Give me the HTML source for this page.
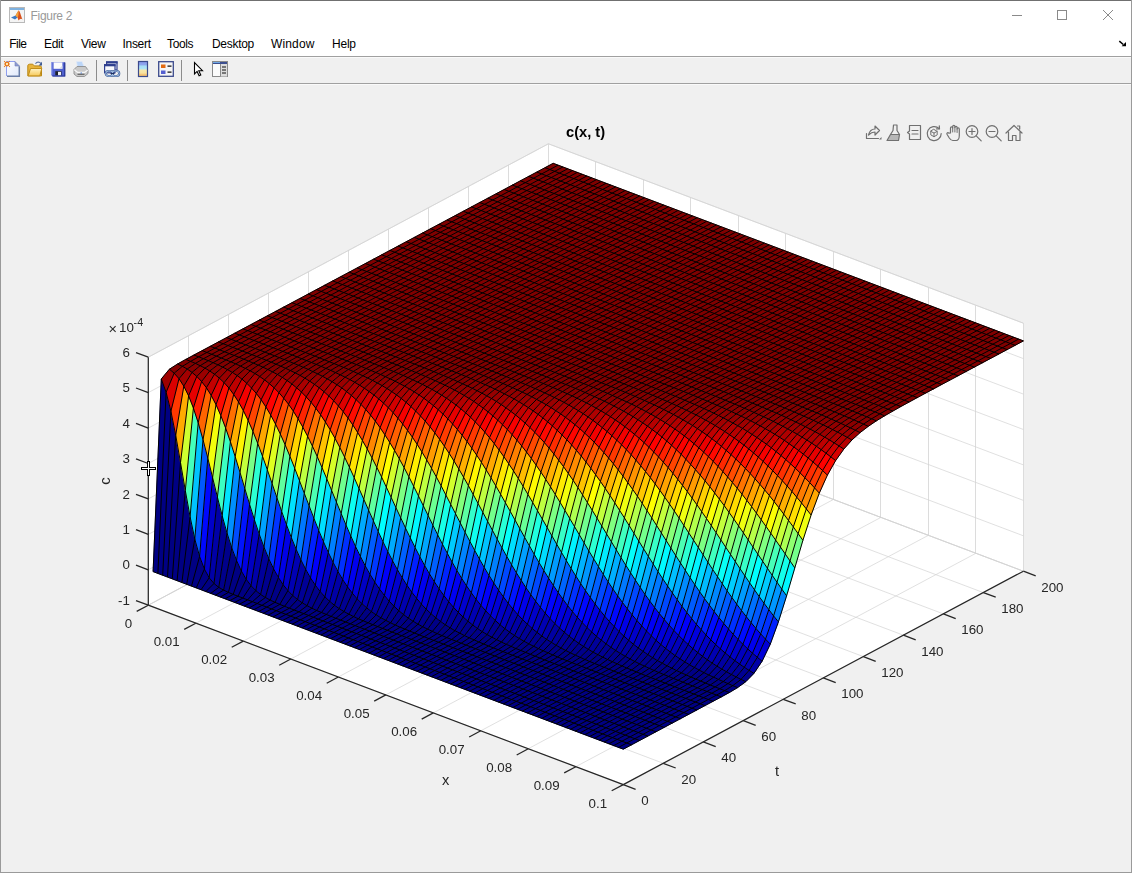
<!DOCTYPE html>
<html><head><meta charset="utf-8"><title>Figure 2</title>
<style>
html,body{margin:0;padding:0}
body{width:1132px;height:873px;overflow:hidden;background:#f0f0f0;position:relative;font-family:"Liberation Sans",sans-serif}
.a{position:absolute}
.m{position:absolute;top:37px;font-size:12px;line-height:14px;color:#000;white-space:nowrap}
svg{position:absolute;left:0;top:0}
svg{will-change:transform}
</style></head><body>
<div class="a" style="left:0;top:0;width:1132px;height:31px;background:#fff"></div>
<div class="a" style="left:30.5px;top:8px;font-size:12px;letter-spacing:-.3px;line-height:16px;color:#999">Figure 2</div>
<div class="a" style="left:0;top:31px;width:1132px;height:25px;background:#fff"></div>
<div class="m" style="left:9.2px;letter-spacing:-0.5px">File</div>
<div class="m" style="left:44px;letter-spacing:-0.35px">Edit</div>
<div class="m" style="left:81px;letter-spacing:-0.33px">View</div>
<div class="m" style="left:122.5px;letter-spacing:-0.3px">Insert</div>
<div class="m" style="left:167px;letter-spacing:-0.36px">Tools</div>
<div class="m" style="left:212px;letter-spacing:-0.3px">Desktop</div>
<div class="m" style="left:271px;letter-spacing:0.15px">Window</div>
<div class="m" style="left:332px;letter-spacing:-0.22px">Help</div>
<div class="a" style="left:0;top:56px;width:1132px;height:1px;background:#a0a0a0"></div>
<div class="a" style="left:0;top:57px;width:1132px;height:1px;background:#fafafa"></div>
<div class="a" style="left:0;top:83px;width:1132px;height:1px;background:#a0a0a0"></div>
<div class="a" style="left:0;top:84px;width:1132px;height:1px;background:#fafafa"></div>
<div class="a" style="left:96px;top:60px;width:1px;height:21px;background:#8c8c8c"></div>
<div class="a" style="left:127px;top:60px;width:1px;height:21px;background:#8c8c8c"></div>
<div class="a" style="left:181px;top:60px;width:1px;height:21px;background:#8c8c8c"></div>
<svg width="1132" height="90" viewBox="0 0 1132 90"><g transform="translate(9,7)"><rect x="0.5" y="0.5" width="15" height="15" fill="#f4f4f4" stroke="#b9b9b9"/><rect x="1" y="1" width="14" height="2" fill="#7fb2e0"/><path d="M2 10.5L6.5 8.5L8.5 10.5L6 12.5z" fill="#3a78c2"/><path d="M6.5 8.5L9.5 3.5C10.5 3 11.5 7 13.5 12.5C12 11 11 12 9.5 13.5L8.5 10.5z" fill="#d8511c"/><path d="M9.5 3.5C10 5 9.6 9 8.5 10.5L6.5 8.5z" fill="#f2a33a"/></g><g stroke="#8a8a8a" stroke-width="1" fill="none"><path d="M1012 15.5h10"/><rect x="1057.5" y="10.5" width="9" height="9"/><path d="M1103 10l10 10M1113 10l-10 10"/></g><path d="M1119.300 41.200l4 3.300" stroke="#000" stroke-width="1.500" fill="none"/><path d="M1126 42v4.200h-4.400z" fill="#000"/><defs><linearGradient id="pg" x1="0" y1="0" x2="1" y2="1"><stop offset="0" stop-color="#fff"/><stop offset="1" stop-color="#dfe8fb"/></linearGradient><linearGradient id="fd" x1="0" y1="0" x2="0" y2="1"><stop offset="0" stop-color="#fff3c4"/><stop offset="1" stop-color="#f6c95a"/></linearGradient></defs><g transform="translate(4,61)"><path d="M2.500 .500h8.500l4.500 4.500v10.500h-13z" fill="url(#pg)"/><path d="M2.500 15v-14.500h8.500" fill="none" stroke="#8f9ff0" stroke-width="1"/><path d="M11 .500v4.500h4.500z" fill="#8c9bd2" stroke="#7282b8" stroke-width=".6"/><path d="M3 15.200h12.300v-10" fill="none" stroke="#6b7fa8" stroke-width="1.500"/><circle cx="3" cy="3" r="1.900" fill="#ffe7b0" stroke="#e8740f" stroke-width="1.400"/><path d="M.200 .200l.700 .700M5.100 5.100l.700 .700M.200 5.800l.700-.700M5.100 .900l.700-.700" stroke="#e8740f" stroke-width="1.100"/></g><g transform="translate(27,61)"><path d="M.800 5c0-1.200.600-1.800 1.800-1.800h3.200l1.500 1.700h5.700c1 0 1.500.500 1.500 1.500v8.500h-13.700z" fill="#e8b43c" stroke="#b98612"/><path d="M1.200 14.900l2.300-7.400h11.300l-2 7.400z" fill="url(#fd)" stroke="#c08d18"/><path d="M8.500 2.800c1.200-2 4-2.200 5.500-.200" fill="none" stroke="#5d77a8" stroke-width="1.200"/><path d="M15 .800v3.700h-3.300z" fill="#3f5a92"/></g><g transform="translate(50,61)"><path d="M1.200 1.200h13.800v14.300h-12.300l-1.500-1.500z" fill="#4f60d0"/><path d="M1.700 1.200v12.500" stroke="#97a3ee" stroke-width="1.200"/><path d="M2.500 15h12.300v-13.500" fill="none" stroke="#2a3590" stroke-width="1.200"/><rect x="3.600" y="1.400" width="8.800" height="6.400" fill="#fbfbfd"/><path d="M9 7.800l3.400-3.400v3.400z" fill="#d7dbe6"/><rect x="5.300" y="10.200" width="6.200" height="4" fill="#1d2028"/><rect x="8" y="10.800" width="3" height="3.400" fill="#eef0f4"/></g><g transform="translate(73,61)"><path d="M3.500 .500h5.500l2.500 6h-7z" fill="#bcd6f8" stroke="#dfe9f7" stroke-width=".8"/><path d="M1 8.500l3-3h8.500l2.500 3.500v3.500l-3.500 3h-7.500l-3-2.500z" fill="#c9c9c9" stroke="#8d8d8d" stroke-width=".9"/><path d="M1.300 8.800l3.200 2.500h7.300l3-2.300" fill="none" stroke="#f6f6f6" stroke-width="1.300"/><path d="M4.500 13.300h7" stroke="#5e5e5e" stroke-width="1.100"/><path d="M7.500 12h1.500" stroke="#4d7fd0" stroke-width="1"/></g><g transform="translate(104,61)"><rect x="2.600" y="1" width="10.400" height="8" fill="#f7f8fc" stroke="#2f3f8f" stroke-width="1.200"/><rect x="2" y=".300" width="11.600" height="2.200" fill="#2f3f8f"/><rect x=".600" y="3.800" width="10.400" height="8" fill="#f7f8fc" stroke="#2f3f8f" stroke-width="1.200"/><rect x="0" y="3.100" width="11.600" height="2.200" fill="#2f3f8f"/><rect x="1.800" y="10" width="7.200" height="5" rx="2.500" fill="none" stroke="#3d5e96" stroke-width="2.200"/><rect x="8" y="10" width="7.200" height="5" rx="2.500" fill="none" stroke="#3d5e96" stroke-width="2.200"/><rect x="1.800" y="10" width="7.200" height="5" rx="2.500" fill="none" stroke="#b9d3f2" stroke-width=".900"/><rect x="8" y="10" width="7.200" height="5" rx="2.500" fill="none" stroke="#b9d3f2" stroke-width=".900"/><path d="M6.500 12.500h4" stroke="#1f2f5f" stroke-width="1.200"/></g><defs><linearGradient id="cb" x1="0" y1="0" x2="0" y2="1"><stop offset="0" stop-color="#8898ea"/><stop offset=".22" stop-color="#8fa6ee"/><stop offset=".3" stop-color="#a6def6"/><stop offset=".5" stop-color="#b2e4f6"/><stop offset=".56" stop-color="#f6e8ac"/><stop offset=".78" stop-color="#f8e2a0"/><stop offset=".84" stop-color="#f6c87c"/><stop offset="1" stop-color="#f4be6c"/></linearGradient></defs><g transform="translate(135,61)"><rect x="3.500" y="0.500" width="9" height="15" fill="url(#cb)" stroke="#3b4a8c" stroke-width="1.200"/></g><g transform="translate(158,61)"><rect x="0.700" y="0.700" width="14.600" height="14.600" fill="#f6f6f6" stroke="#3b4a8c" stroke-width="1.300"/><rect x="3" y="3.500" width="4.500" height="3.500" fill="#e26a12"/><rect x="3" y="9.500" width="4.500" height="3.500" fill="#5560d0"/><path d="M9.500 5.200h4M9.500 11.200h4" stroke="#111" stroke-width="1.300"/></g><g transform="translate(189,61)"><path d="M5.500 1.500v11.500l2.600-2.600 2 4.400 1.700-.8-2-4.300h3.700z" fill="#fff" stroke="#000" stroke-width="1.100" stroke-linejoin="miter"/></g><g transform="translate(212,61)"><rect x="0.500" y="0.500" width="15" height="15" fill="#fbfbfb" stroke="#8a8a8a"/><rect x="1" y="1" width="14" height="2" fill="#3d4f8f"/><rect x="1" y="1" width="7" height="1" fill="#6fa8e6"/><rect x="8.500" y="3" width="6.500" height="12.500" fill="#dcdcdc"/><path d="M8.500 3v12.500" stroke="#8a8a8a"/><path d="M10 6h4M10 9h4M10 12h4" stroke="#111" stroke-width="1.200"/></g></svg>
<svg width="1132" height="873" viewBox="0 0 1132 873">
<polygon points="148.3,605.2 623.3,784.6 1023.4,571.2 548.4,391.8" fill="#fff"/>
<polygon points="148.3,605.2 548.4,391.8 548.4,143.8 148.3,357.2" fill="#fff"/>
<polygon points="548.4,391.8 1023.4,571.2 1023.4,323.2 548.4,143.8" fill="#fff"/>
<g><line x1="148.3" y1="605.2" x2="548.4" y2="391.8" stroke="#d2d2d2" stroke-width="0.7"/><line x1="548.5" y1="391.8" x2="548.5" y2="143.8" stroke="#dcdcdc" stroke-width="1"/><line x1="195.8" y1="623.2" x2="595.9" y2="409.8" stroke="#d2d2d2" stroke-width="0.7"/><line x1="595.5" y1="409.8" x2="595.5" y2="161.8" stroke="#dcdcdc" stroke-width="1"/><line x1="243.3" y1="641.1" x2="643.4" y2="427.7" stroke="#d2d2d2" stroke-width="0.7"/><line x1="643.5" y1="427.7" x2="643.5" y2="179.7" stroke="#dcdcdc" stroke-width="1"/><line x1="290.8" y1="659.0" x2="690.9" y2="445.7" stroke="#d2d2d2" stroke-width="0.7"/><line x1="690.5" y1="445.7" x2="690.5" y2="197.6" stroke="#dcdcdc" stroke-width="1"/><line x1="338.3" y1="677.0" x2="738.4" y2="463.6" stroke="#d2d2d2" stroke-width="0.7"/><line x1="738.5" y1="463.6" x2="738.5" y2="215.6" stroke="#dcdcdc" stroke-width="1"/><line x1="385.8" y1="694.9" x2="785.9" y2="481.5" stroke="#d2d2d2" stroke-width="0.7"/><line x1="785.5" y1="481.5" x2="785.5" y2="233.5" stroke="#dcdcdc" stroke-width="1"/><line x1="433.3" y1="712.9" x2="833.4" y2="499.5" stroke="#d2d2d2" stroke-width="0.7"/><line x1="833.5" y1="499.5" x2="833.5" y2="251.5" stroke="#dcdcdc" stroke-width="1"/><line x1="480.8" y1="730.8" x2="880.9" y2="517.4" stroke="#d2d2d2" stroke-width="0.7"/><line x1="880.5" y1="517.4" x2="880.5" y2="269.4" stroke="#dcdcdc" stroke-width="1"/><line x1="528.3" y1="748.7" x2="928.4" y2="535.3" stroke="#d2d2d2" stroke-width="0.7"/><line x1="928.5" y1="535.3" x2="928.5" y2="287.3" stroke="#dcdcdc" stroke-width="1"/><line x1="575.8" y1="766.7" x2="975.9" y2="553.3" stroke="#d2d2d2" stroke-width="0.7"/><line x1="975.5" y1="553.3" x2="975.5" y2="305.3" stroke="#dcdcdc" stroke-width="1"/><line x1="623.3" y1="784.6" x2="1023.4" y2="571.2" stroke="#d2d2d2" stroke-width="0.7"/><line x1="1023.5" y1="571.2" x2="1023.5" y2="323.2" stroke="#dcdcdc" stroke-width="1"/><line x1="148.3" y1="605.2" x2="623.3" y2="784.6" stroke="#d2d2d2" stroke-width="0.7"/><line x1="148.5" y1="605.2" x2="148.5" y2="357.2" stroke="#dcdcdc" stroke-width="1"/><line x1="188.3" y1="583.9" x2="663.3" y2="763.3" stroke="#d2d2d2" stroke-width="0.7"/><line x1="188.5" y1="583.9" x2="188.5" y2="335.9" stroke="#dcdcdc" stroke-width="1"/><line x1="228.3" y1="562.5" x2="703.3" y2="741.9" stroke="#d2d2d2" stroke-width="0.7"/><line x1="228.5" y1="562.5" x2="228.5" y2="314.5" stroke="#dcdcdc" stroke-width="1"/><line x1="268.3" y1="541.2" x2="743.3" y2="720.6" stroke="#d2d2d2" stroke-width="0.7"/><line x1="268.5" y1="541.2" x2="268.5" y2="293.2" stroke="#dcdcdc" stroke-width="1"/><line x1="308.3" y1="519.9" x2="783.3" y2="699.3" stroke="#d2d2d2" stroke-width="0.7"/><line x1="308.5" y1="519.9" x2="308.5" y2="271.9" stroke="#dcdcdc" stroke-width="1"/><line x1="348.4" y1="498.5" x2="823.3" y2="677.9" stroke="#d2d2d2" stroke-width="0.7"/><line x1="348.5" y1="498.5" x2="348.5" y2="250.5" stroke="#dcdcdc" stroke-width="1"/><line x1="388.4" y1="477.2" x2="863.4" y2="656.6" stroke="#d2d2d2" stroke-width="0.7"/><line x1="388.5" y1="477.2" x2="388.5" y2="229.2" stroke="#dcdcdc" stroke-width="1"/><line x1="428.4" y1="455.8" x2="903.4" y2="635.2" stroke="#d2d2d2" stroke-width="0.7"/><line x1="428.5" y1="455.8" x2="428.5" y2="207.8" stroke="#dcdcdc" stroke-width="1"/><line x1="468.4" y1="434.5" x2="943.4" y2="613.9" stroke="#d2d2d2" stroke-width="0.7"/><line x1="468.5" y1="434.5" x2="468.5" y2="186.5" stroke="#dcdcdc" stroke-width="1"/><line x1="508.4" y1="413.2" x2="983.4" y2="592.6" stroke="#d2d2d2" stroke-width="0.7"/><line x1="508.5" y1="413.2" x2="508.5" y2="165.2" stroke="#dcdcdc" stroke-width="1"/><line x1="548.4" y1="391.8" x2="1023.4" y2="571.2" stroke="#d2d2d2" stroke-width="0.7"/><line x1="548.5" y1="391.8" x2="548.5" y2="143.8" stroke="#dcdcdc" stroke-width="1"/><line x1="148.3" y1="605.2" x2="548.4" y2="391.8" stroke="#d2d2d2" stroke-width="0.7"/><line x1="548.4" y1="391.8" x2="1023.4" y2="571.2" stroke="#d2d2d2" stroke-width="0.7"/><line x1="148.3" y1="569.8" x2="548.4" y2="356.4" stroke="#d2d2d2" stroke-width="0.7"/><line x1="548.4" y1="356.4" x2="1023.4" y2="535.8" stroke="#d2d2d2" stroke-width="0.7"/><line x1="148.3" y1="534.4" x2="548.4" y2="321.0" stroke="#d2d2d2" stroke-width="0.7"/><line x1="548.4" y1="321.0" x2="1023.4" y2="500.4" stroke="#d2d2d2" stroke-width="0.7"/><line x1="148.3" y1="498.9" x2="548.4" y2="285.5" stroke="#d2d2d2" stroke-width="0.7"/><line x1="548.4" y1="285.5" x2="1023.4" y2="464.9" stroke="#d2d2d2" stroke-width="0.7"/><line x1="148.3" y1="463.5" x2="548.4" y2="250.1" stroke="#d2d2d2" stroke-width="0.7"/><line x1="548.4" y1="250.1" x2="1023.4" y2="429.5" stroke="#d2d2d2" stroke-width="0.7"/><line x1="148.3" y1="428.1" x2="548.4" y2="214.7" stroke="#d2d2d2" stroke-width="0.7"/><line x1="548.4" y1="214.7" x2="1023.4" y2="394.1" stroke="#d2d2d2" stroke-width="0.7"/><line x1="148.3" y1="392.6" x2="548.4" y2="179.2" stroke="#d2d2d2" stroke-width="0.7"/><line x1="548.4" y1="179.2" x2="1023.4" y2="358.6" stroke="#d2d2d2" stroke-width="0.7"/><line x1="148.3" y1="357.2" x2="548.4" y2="143.8" stroke="#d2d2d2" stroke-width="0.7"/><line x1="548.4" y1="143.8" x2="1023.4" y2="323.2" stroke="#d2d2d2" stroke-width="0.7"/><line x1="548.4" y1="391.8" x2="1023.4" y2="571.2" stroke="#d2d2d2" stroke-width="0.7"/><line x1="148.3" y1="605.2" x2="548.4" y2="391.8" stroke="#d2d2d2" stroke-width="0.7"/><line x1="148.3" y1="357.2" x2="548.4" y2="143.8" stroke="#d2d2d2" stroke-width="0.7"/><line x1="548.4" y1="143.8" x2="1023.4" y2="323.2" stroke="#d2d2d2" stroke-width="0.7"/></g>
<g stroke-width=".6"><path fill="#000083" stroke="#000083" d="M161.3 379l4.8 13.3 4.8 18.9 4.8 24 4.8 27.3 4.8 28 4.8 26.3 4.7 22.3 4.8 17.4 4.8 12.6 4.8 8.7 4.8 5.7 4.8 3.9 4.8 2.7 4.8 2.3 4.8 2 19.2 7.3 379.1 143.1-8.2 4.4-470.2-177.6zM231.8 548l4.8 12.7 4.8 10.4 4.8 8.2 4.8 6.4 4.8 4.9 4.8 3.9 4.8 3 4.8 2.6 4.8 2.2 4.8 2.1 9.6 3.8 215.9 81.6 134.3 50.7-8.1 4.3-393.5-148.6-4.8-1.8-4.8-2-4.8-2.3zM283.1 584.7l4.8 5.9 4.8 4.9 4.8 4 4.8 3.4 4.8 2.8 4.8 2.5 4.8 2.3 4.8 2 9.6 3.9 24 9.2 292.7 110.5-8.2 4.4-345.4-130.5-9.6-3.7-4.8-1.9-4.8-2.1zM324.9 596.8l4.8 4.6 4.8 3.9 4.8 3.4 4.8 2.9 4.8 2.6 4.8 2.4 4.8 2.2 4.8 2 9.6 3.9 24 9.2 259.1 97.9-8.2 4.3-307.1-116-14.4-5.6-4.8-2-4.8-2zM366.7 607.9l4.7 3.7 4.8 3.3 4.8 2.9 4.8 2.6 4.8 2.4 4.8 2.3 4.8 2.1 9.6 3.9 14.4 5.7 115.2 43.5 124.7 47.1-8.1 4.4-268.7-101.5-14.4-5.6-9.6-3.9-4.8-2zM408.4 618.2l4.8 3.1 4.8 2.9 4.8 2.6 4.8 2.4 4.8 2.2 4.8 2.2 9.6 4 14.4 5.6 48 18.3 163.1 61.6-8.2 4.3-235.1-88.8-14.4-5.6-9.6-3.8-4.8-2zM445.4 624.9l4.8 3 4.8 2.8 4.8 2.5 4.7 2.4 4.8 2.2 9.6 4.2 9.6 4 19.2 7.4 163.2 61.7 9.6 3.6-8.2 4.4-201.5-76.2-19.2-7.4-9.6-3.9-4.8-2zM487.1 634.6l4.8 2.6 4.8 2.5 4.8 2.4 4.8 2.2 9.6 4.2 14.4 5.8 24 9.3 134.3 50.8-8.1 4.3-168-63.4-19.2-7.4-9.6-3.9-4.8-2zM524.1 641.3l4.8 2.6 4.8 2.4 4.8 2.3 9.6 4.3 9.5 4.1 14.4 5.7 28.8 11 96 36.3-8.2 4.4-139.1-52.6-19.2-7.5-14.4-5.8zM561 648l4.8 2.5 4.8 2.4 4.8 2.3 9.6 4.3 9.6 4 14.4 5.7 28.8 11.1 67.2 25.3-8.2 4.4-110.4-41.7-19.2-7.5-14.4-5.8zM598 654.7l4.8 2.5 4.8 2.3 9.6 4.4 9.6 4.1 14.3 5.8 24 9.3 48 18.2-8.1 4.3-81.6-30.8-19.2-7.5-14.4-5.8zM634.9 661.5l4.8 2.4 9.6 4.5 9.6 4.1 14.4 5.9 19.2 7.5 28.8 11-8.2 4.4-52.8-20-19.2-7.5-14.3-5.8zM671.9 668.2l4.8 2.4 9.6 4.4 9.6 4.1 14.4 5.9 19.1 7.5-8.1 4.4-33.6-12.8-14.4-5.7-9.6-3.9zM708.8 675l9.6 4.4 9.6 4.2 9.6 4-8.2 4.9-19.1-7.5-9.6-3.9z"/>
<path fill="#000087" stroke="#000087" d="M278.4 577.5l4.7 7.2-8.1 17.6-4.8-2.2zM320.1 591.5l4.8 5.3-8.2 13.7-4.8-2.3zM361.9 603.6l4.8 4.3-8.2 10.9-4.8-2.2zM398.8 610.7l4.8 3.9 4.8 3.6-8.2 9-4.8-2.1-4.8-2.3zM435.8 617.8l4.8 3.7 4.8 3.4-8.2 8.7-4.8-2.2-4.8-2.2zM477.5 628.5l4.8 3.2 4.8 2.9-8.2 7.4-9.6-4.2zM514.5 635.5l4.8 3 4.8 2.8-8.2 7.2-9.6-4.2zM551.4 642.4l4.8 2.9 4.8 2.7-8.2 7-9.5-4.2zM588.4 649.4l4.8 2.8 4.8 2.5-8.2 6.8-9.6-4.1zM620.5 653.5l4.8 2.8 4.8 2.7 4.8 2.5-8.1 6.5-9.6-4.1-4.8-2.1zM657.5 660.6l4.8 2.6 4.8 2.6 4.8 2.4-8.2 6.3-9.6-4-4.8-2.1zM694.4 667.5l4.8 2.6 4.8 2.5 4.8 2.4-8.1 6.1-9.6-4.1-4.8-2zM731.4 674.5l4.8 2.5 4.8 2.4 4.8 2.3-8.2 5.9-9.6-4-4.8-2z"/>
<path fill="#00008b" stroke="#00008b" d="M227 533l4.8 15-8.2 42.1-4.8-2.7zM273.6 568.9l4.8 8.6-8.2 22.6-4.8-2.6zM315.3 585.2l4.8 6.3-8.2 16.7-4.8-2.5zM357.1 598.8l4.8 4.8-8.2 13-4.8-2.4zM394 606.2l4.8 4.5-8.2 12.1-4.8-2.4zM431 613.7l4.8 4.1-8.2 11.4-4.8-2.4zM467.9 621.2l4.8 3.8 4.8 3.5-8.2 9.3-4.8-2.2-4.7-2.4zM504.9 628.7l4.8 3.5 4.8 3.3-8.2 8.8-4.8-2.2-4.8-2.4zM541.8 636l4.8 3.4 4.8 3-8.1 8.4-4.8-2.2-4.8-2.3zM578.8 643.3l4.8 3.2 4.8 2.9-8.2 8-4.8-2.2-4.8-2.3zM615.7 650.5l4.8 3-8.1 8.3-4.8-2.3zM647.9 654.7l4.8 3 4.8 2.9-8.2 7.8-9.6-4.5zM684.8 661.9l4.8 2.9 4.8 2.7-8.1 7.5-9.6-4.4zM721.8 669.1l4.8 2.7 4.8 2.7-8.2 7.1-9.6-4.4z"/>
<path fill="#00008f" stroke="#00008f" d="M268.8 558.8l4.8 10.1-8.2 28.6-4.8-3zM310.5 577.9l4.8 7.3-8.2 20.5-4.8-2.8zM352.3 593.2l4.8 5.6-8.2 15.4-4.8-2.6zM389.2 601.2l4.8 5-8.2 14.2-4.8-2.6zM426.2 609.2l4.8 4.5-8.2 13.1-4.8-2.6zM463.1 617l4.8 4.2-8.1 12-4.8-2.5zM500.1 624.8l4.8 3.9-8.2 11-4.8-2.5zM537 632.4l4.8 3.6-8.1 10.3-4.8-2.4zM574 639.9l4.8 3.4-8.2 9.6-4.8-2.4zM610.9 647.3l4.8 3.2-8.1 9-4.8-2.3zM643.1 651.4l4.8 3.3-8.2 9.2-4.8-2.4zM680 658.8l4.8 3.1-8.1 8.7-4.8-2.4zM712.2 663.1l4.8 3.1 4.8 2.9-8.2 8.1-4.8-2.2-4.8-2.4zM749.1 670.4l4.8 3-8.1 8.3-4.8-2.3z"/>
<path fill="#000093" stroke="#000093" d="M222.2 515.8l4.8 17.2-8.2 54.4-4.8-3.9zM347.5 586.8l4.8 6.4-8.2 18.4-4.8-2.9zM495.3 620.5l4.8 4.3-8.2 12.4-4.8-2.6zM532.2 628.5l4.8 3.9-8.1 11.5-4.8-2.6zM569.2 636.3l4.8 3.6-8.2 10.6-4.8-2.5zM606.1 643.9l4.8 3.4-8.1 9.9-4.8-2.5zM638.3 648l4.8 3.4-8.2 10.1-4.8-2.5zM675.2 655.6l4.8 3.2-8.1 9.4-4.8-2.4zM707.4 659.8l4.8 3.3-8.2 9.5-4.8-2.5zM744.3 667.3l4.8 3.1-8.1 9-4.8-2.4z"/>
<path fill="#000097" stroke="#000097" d="M305.7 569.4l4.8 8.5-8.2 25-4.8-3.4zM384.4 595.5l4.8 5.7-8.2 16.6-4.8-2.9zM421.4 604.1l4.8 5.1-8.2 15-4.8-2.9zM458.3 612.4l4.8 4.6-8.1 13.7-4.8-2.8zM527.4 624.2l4.8 4.3-8.1 12.8-4.8-2.8zM564.4 632.3l4.8 4-8.2 11.7-4.8-2.7zM601.3 640.2l4.8 3.7-8.1 10.8-4.8-2.5zM633.5 644.3l4.8 3.7-8.2 11-4.8-2.7zM670.4 652.1l4.8 3.5-8.1 10.2-4.8-2.6zM702.6 656.3l4.8 3.5-8.2 10.3-4.8-2.6zM739.6 664.1l4.7 3.2-8.1 9.7-4.8-2.5z"/>
<path fill="#00009b" stroke="#00009b" d="M264 547.2l4.8 11.6-8.2 35.7-4.8-3.9zM342.7 579.6l4.8 7.2-8.2 21.9-4.8-3.4zM379.6 589.2l4.8 6.3-8.2 19.4-4.8-3.3zM416.6 598.4l4.8 5.7-8.2 17.2-4.8-3.1zM453.5 607.3l4.8 5.1-8.1 15.5-4.8-3zM490.5 615.9l4.8 4.6-8.2 14.1-4.8-2.9zM559.6 628.1l4.8 4.2-8.2 13-4.8-2.9zM596.5 636.3l4.8 3.9-8.1 12-4.8-2.8zM665.6 648.4l4.8 3.7-8.1 11.1-4.8-2.6zM697.8 652.6l4.8 3.7-8.2 11.2-4.8-2.7zM734.8 660.6l4.8 3.5-8.2 10.4-4.8-2.7z"/>
<path fill="#00009f" stroke="#00009f" d="M522.6 619.6l4.8 4.6-8.1 14.3-4.8-3zM591.7 632l4.8 4.3-8.1 13.1-4.8-2.9zM628.7 640.3l4.8 4-8.2 12-4.8-2.8zM660.8 644.5l4.8 3.9-8.1 12.2-4.8-2.9zM730 656.9l4.8 3.7-8.2 11.2-4.8-2.7z"/>
<path fill="#0000a3" stroke="#0000a3" d="M300.9 559.9l4.8 9.5-8.2 30.1-4.8-4zM448.7 601.7l4.8 5.6-8.1 17.6-4.8-3.4zM485.7 610.8l4.8 5.1-8.2 15.8-4.8-3.2zM554.8 623.5l4.8 4.6-8.2 14.3-4.8-3zM623.9 636.1l4.8 4.2-8.2 13.2-4.8-3zM693 648.7l4.8 3.9-8.2 12.2-4.8-2.9zM725.2 653l4.8 3.9-8.2 12.2-4.8-2.9z"/>
<path fill="#0000a7" stroke="#0000a7" d="M217.4 497.1l4.8 18.7-8.2 67.7-4.8-5.7zM337.9 571.4l4.8 8.2-8.2 25.7-4.8-3.9zM374.8 582.1l4.8 7.1-8.2 22.4-4.7-3.7zM411.8 592.2l4.8 6.2-8.2 19.8-4.8-3.6zM517.8 614.6l4.8 5-8.1 15.9-4.8-3.3zM586.9 627.5l4.8 4.5-8.1 14.5-4.8-3.2zM656 640.3l4.8 4.2-8.1 13.2-4.8-3zM757.3 657.3l4.8 3.9-8.2 12.2-4.8-3z"/>
<path fill="#0000ab" stroke="#0000ab" d="M259.2 534.1l4.8 13.1-8.2 43.4-4.8-4.9zM480.9 605.3l4.8 5.5-8.2 17.7-4.8-3.5zM550 618.5l4.8 5-8.2 15.9-4.8-3.4zM619.1 631.6l4.8 4.5-8.2 14.4-4.8-3.2zM688.2 644.5l4.8 4.2-8.2 13.2-4.8-3.1zM720.4 648.9l4.8 4.1-8.2 13.2-4.8-3.1z"/>
<path fill="#0000af" stroke="#0000af" d="M407 585.3l4.8 6.9-8.2 22.4-4.8-3.9zM443.9 595.6l4.8 6.1-8.1 19.8-4.8-3.7zM513 609.1l4.8 5.5-8.1 17.6-4.8-3.5zM582.1 622.5l4.8 5-8.1 15.8-4.8-3.4zM651.3 635.8l4.7 4.5-8.1 14.4-4.8-3.3zM683.4 640.1l4.8 4.4-8.2 14.3-4.8-3.2zM752.5 653.2l4.8 4.1-8.2 13.1-4.8-3.1z"/>
<path fill="#0000b3" stroke="#0000b3" d="M296.1 549.2l4.8 10.7-8.2 35.6-4.8-4.9zM370 574.3l4.8 7.8-8.1 25.8-4.8-4.3zM476.1 599.3l4.8 6-8.2 19.7-4.8-3.8zM545.2 613.1l4.8 5.4-8.2 17.5-4.8-3.6zM614.3 626.7l4.8 4.9-8.2 15.7-4.8-3.4zM715.6 644.5l4.8 4.4-8.2 14.2-4.8-3.3z"/>
<path fill="#0000b7" stroke="#0000b7" d="M333.1 562.4l4.8 9-8.2 30-4.8-4.6zM577.3 617.3l4.8 5.2-8.1 17.4-4.8-3.6zM646.5 631l4.8 4.8-8.2 15.6-4.8-3.4zM747.7 648.9l4.8 4.3-8.2 14.1-4.7-3.2z"/>
<path fill="#0000bb" stroke="#0000bb" d="M439.1 588.9l4.8 6.7-8.1 22.2-4.8-4.1zM508.2 603.3l4.8 5.8-8.1 19.6-4.8-3.9zM609.5 621.6l4.8 5.1-8.2 17.2-4.8-3.7zM678.6 635.4l4.8 4.7-8.2 15.5-4.8-3.5zM710.8 639.8l4.8 4.7-8.2 15.3-4.8-3.5z"/>
<path fill="#0000bf" stroke="#0000bf" d="M402.2 577.8l4.8 7.5-8.2 25.4-4.8-4.5zM471.3 592.8l4.8 6.5-8.2 21.9-4.8-4.2zM540.4 607.4l4.8 5.7-8.2 19.3-4.8-3.9zM641.7 625.9l4.8 5.1-8.2 17-4.8-3.7zM742.9 644.3l4.8 4.6-8.1 15.2-4.8-3.5z"/>
<path fill="#0000c3" stroke="#0000c3" d="M254.4 519.7l4.8 14.4-8.2 51.6-4.8-6.4zM365.2 565.8l4.8 8.5-8.1 29.3-4.8-4.8zM572.5 611.7l4.8 5.6-8.1 19-4.8-4zM673.8 630.4l4.8 5-8.2 16.7-4.8-3.7z"/>
<path fill="#0000c7" stroke="#0000c7" d="M328.3 552.5l4.8 9.9-8.2 34.4-4.8-5.3zM434.3 581.7l4.8 7.2-8.1 24.8-4.8-4.5zM503.4 596.9l4.8 6.4-8.1 21.5-4.8-4.3zM604.7 616.1l4.8 5.5-8.2 18.6-4.8-3.9zM706 634.9l4.8 4.9-8.2 16.5-4.8-3.7zM738.1 639.5l4.8 4.8-8.1 16.3-4.8-3.7z"/>
<path fill="#0000cb" stroke="#0000cb" d="M212.6 477.6l4.8 19.5-8.2 80.7-4.8-8.7zM291.3 537.5l4.8 11.7-8.2 41.4-4.8-5.9zM535.6 601.2l4.8 6.2-8.2 21.1-4.8-4.3zM636.9 620.5l4.8 5.4-8.2 18.4-4.8-4z"/>
<path fill="#0000cf" stroke="#0000cf" d="M397.4 569.7l4.8 8.1-8.2 28.4-4.8-5zM466.5 585.8l4.8 7-8.2 24.2-4.8-4.6zM669 625.1l4.8 5.3-8.2 18-4.8-3.9z"/>
<path fill="#0000d3" stroke="#0000d3" d="M567.7 605.7l4.8 6-8.1 20.6-4.8-4.2zM599.9 610.2l4.8 5.9-8.2 20.2-4.8-4.3zM701.2 629.7l4.8 5.2-8.2 17.7-4.8-3.9zM733.3 634.4l4.8 5.1-8.1 17.4-4.8-3.9z"/>
<path fill="#0000d7" stroke="#0000d7" d="M360.4 556.5l4.8 9.3-8.1 33-4.8-5.6zM498.6 590.2l4.8 6.7-8.1 23.6-4.8-4.6zM632.1 614.8l4.8 5.7-8.2 19.8-4.8-4.2zM765.5 639.1l4.8 5-8.2 17.1-4.8-3.9z"/>
<path fill="#0000db" stroke="#0000db" d="M429.5 573.9l4.8 7.8-8.1 27.5-4.8-5.1zM530.8 594.7l4.8 6.5-8.2 23-4.8-4.6zM664.2 619.5l4.8 5.6-8.2 19.4-4.8-4.2z"/>
<path fill="#0000df" stroke="#0000df" d="M323.5 541.8l4.8 10.7-8.2 39-4.8-6.3zM461.7 578.4l4.8 7.4-8.2 26.6-4.8-5.1zM563 599.3l4.7 6.4-8.1 22.4-4.8-4.6zM696.4 624.3l4.8 5.4-8.2 19-4.8-4.2zM728.5 629l4.8 5.4-8.1 18.6-4.8-4.1z"/>
<path fill="#0000e3" stroke="#0000e3" d="M249.6 504.4l4.8 15.3-8.2 59.6-4.8-8.2zM392.6 560.9l4.8 8.8-8.2 31.5-4.8-5.7zM595.1 604l4.8 6.2-8.2 21.8-4.8-4.5zM760.7 633.9l4.8 5.2-8.2 18.2-4.8-4.1z"/>
<path fill="#0000e7" stroke="#0000e7" d="M286.5 524.8l4.8 12.7-8.2 47.2-4.7-7.2zM493.8 583l4.8 7.2-8.1 25.7-4.8-5.1zM627.3 608.8l4.8 6-8.2 21.3-4.8-4.5z"/>
<path fill="#0000eb" stroke="#0000eb" d="M526 587.8l4.8 6.9-8.2 24.9-4.8-5zM659.4 613.6l4.8 5.9-8.2 20.8-4.7-4.5zM691.6 618.5l4.8 5.8-8.2 20.2-4.8-4.4z"/>
<path fill="#0000ef" stroke="#0000ef" d="M355.6 546.6l4.8 9.9-8.1 36.7-4.8-6.4zM424.7 565.6l4.8 8.3-8.1 30.2-4.8-5.7zM558.2 592.6l4.8 6.7-8.2 24.2-4.8-5zM723.7 623.4l4.8 5.6-8.1 19.9-4.8-4.4zM755.9 628.4l4.8 5.5-8.2 19.3-4.8-4.3z"/>
<path fill="#0000f3" stroke="#0000f3" d="M456.9 570.4l4.8 8-8.2 28.9-4.8-5.6zM590.3 597.5l4.8 6.5-8.2 23.5-4.8-5z"/>
<path fill="#0000f7" stroke="#0000f7" d="M622.5 602.5l4.8 6.3-8.2 22.8-4.8-4.9zM654.6 607.5l4.8 6.1-8.1 22.2-4.8-4.8z"/>
<path fill="#0000fb" stroke="#0000fb" d="M318.7 530.3l4.8 11.5-8.2 43.4-4.8-7.3zM387.8 551.6l4.8 9.3-8.2 34.6-4.8-6.3zM489 575.4l4.8 7.6-8.1 27.8-4.8-5.5zM686.8 612.5l4.8 6-8.2 21.6-4.8-4.7zM718.9 617.6l4.8 5.8-8.1 21.1-4.8-4.7z"/>
<path fill="#0000ff" stroke="#0000ff" d="M521.2 580.4l4.8 7.4-8.2 26.8-4.8-5.5zM751.1 622.7l4.8 5.7-8.2 20.5-4.8-4.6z"/>
<path fill="#0004ff" stroke="#0004ff" d="M419.9 556.8l4.8 8.8-8.1 32.8-4.8-6.2zM553.4 585.5l4.8 7.1-8.2 25.9-4.8-5.4z"/>
<path fill="#0008ff" stroke="#0008ff" d="M207.8 458.1l4.8 19.5-8.2 91.5-4.8-12.6zM281.7 511.5l4.8 13.3-8.1 52.7-4.8-8.6zM585.5 590.7l4.8 6.8-8.2 25-4.8-5.2zM617.7 595.9l4.8 6.6-8.2 24.2-4.8-5.1z"/>
<path fill="#000cff" stroke="#000cff" d="M350.8 536l4.8 10.6-8.1 40.2-4.8-7.2zM452.1 562.1l4.8 8.3-8.2 31.3-4.8-6.1zM649.8 601.1l4.8 6.4-8.1 23.5-4.8-5.1zM682 606.3l4.8 6.2-8.2 22.9-4.8-5zM714.1 611.5l4.8 6.1-8.1 22.2-4.8-4.9zM746.3 616.7l4.8 6-8.2 21.6-4.8-4.8z"/>
<path fill="#0010ff" stroke="#0010ff" d="M484.2 567.4l4.8 8-8.1 29.9-4.8-6z"/>
<path fill="#0014ff" stroke="#0014ff" d="M244.8 488.5l4.8 15.9-8.2 66.7-4.8-10.4zM516.4 572.8l4.8 7.6-8.2 28.7-4.8-5.8z"/>
<path fill="#0018ff" stroke="#0018ff" d="M383 541.8l4.8 9.8-8.2 37.6-4.8-7.1zM548.6 578.2l4.8 7.3-8.2 27.6-4.8-5.7z"/>
<path fill="#001cff" stroke="#001cff" d="M580.7 583.6l4.8 7.1-8.2 26.6-4.8-5.6zM612.9 589l4.8 6.9-8.2 25.7-4.8-5.5zM645 594.4l4.8 6.7-8.1 24.8-4.8-5.4z"/>
<path fill="#0020ff" stroke="#0020ff" d="M313.9 518.3l4.8 12-8.2 47.6-4.8-8.5zM415.1 547.5l4.8 9.3-8.1 35.4-4.8-6.9zM677.2 599.7l4.8 6.6-8.2 24.1-4.8-5.3zM709.3 605.1l4.8 6.4-8.1 23.4-4.8-5.2zM741.5 610.5l4.8 6.2-8.2 22.8-4.8-5.1zM773.6 615.9l4.8 6-8.1 22.2-4.8-5z"/>
<path fill="#0024ff" stroke="#0024ff" d="M447.3 553.3l4.8 8.8-8.2 33.5-4.8-6.7z"/>
<path fill="#002cff" stroke="#002cff" d="M479.4 559l4.8 8.4-8.1 31.9-4.8-6.5zM511.6 564.8l4.8 8-8.2 30.5-4.8-6.4z"/>
<path fill="#0030ff" stroke="#0030ff" d="M346 525l4.8 11-8.1 43.6-4.8-8.2zM543.8 570.5l4.8 7.7-8.2 29.2-4.8-6.2zM575.9 576.1l4.8 7.5-8.2 28.1-4.8-6zM608.1 581.8l4.8 7.2-8.2 27.1-4.8-5.9zM736.7 604.1l4.8 6.4-8.2 23.9-4.8-5.4zM768.8 609.6l4.8 6.3-8.1 23.2-4.8-5.2z"/>
<path fill="#0034ff" stroke="#0034ff" d="M276.9 497.6l4.8 13.9-8.1 57.4-4.8-10.1zM640.2 587.4l4.8 7-8.1 26.1-4.8-5.7zM672.4 593l4.8 6.7-8.2 25.4-4.8-5.6zM704.5 598.6l4.8 6.5-8.1 24.6-4.8-5.4z"/>
<path fill="#0038ff" stroke="#0038ff" d="M378.2 531.5l4.8 10.3-8.2 40.3-4.8-7.8z"/>
<path fill="#0040ff" stroke="#0040ff" d="M410.3 537.9l4.8 9.6-8.1 37.8-4.8-7.5z"/>
<path fill="#0044ff" stroke="#0044ff" d="M442.5 544.2l4.8 9.1-8.2 35.6-4.8-7.2zM474.7 550.4l4.7 8.6-8.1 33.8-4.8-7zM731.9 597.5l4.8 6.6-8.2 24.9-4.8-5.6zM764 603.2l4.8 6.4-8.1 24.3-4.8-5.5z"/>
<path fill="#0048ff" stroke="#0048ff" d="M309.1 505.9l4.8 12.4-8.2 51.1-4.8-9.5zM506.8 556.5l4.8 8.3-8.2 32.1-4.8-6.7zM539 562.5l4.8 8-8.2 30.7-4.8-6.5zM571.1 568.5l4.8 7.6-8.2 29.6-4.7-6.4zM603.3 574.4l4.8 7.4-8.2 28.4-4.8-6.2zM635.4 580.2l4.8 7.2-8.1 27.4-4.8-6zM667.6 586l4.8 7-8.2 26.5-4.8-5.9zM699.7 591.8l4.8 6.8-8.1 25.7-4.8-5.8z"/>
<path fill="#004cff" stroke="#004cff" d="M240 472.4l4.8 16.1-8.2 72.2-4.8-12.7z"/>
<path fill="#0054ff" stroke="#0054ff" d="M341.2 513.6l4.8 11.4-8.1 46.4-4.8-9z"/>
<path fill="#0058ff" stroke="#0058ff" d="M203 439.6l4.8 18.5-8.2 98.4-4.8-17.4zM759.2 596.6l4.8 6.6-8.1 25.2-4.8-5.7z"/>
<path fill="#005cff" stroke="#005cff" d="M373.4 520.9l4.8 10.6-8.2 42.8-4.8-8.5zM694.9 584.8l4.8 7-8.1 26.7-4.8-6zM727.1 590.8l4.8 6.7-8.2 25.9-4.8-5.8z"/>
<path fill="#0060ff" stroke="#0060ff" d="M405.5 528l4.8 9.9-8.1 39.9-4.8-8.1zM437.7 534.8l4.8 9.4-8.2 37.5-4.8-7.8zM598.5 566.7l4.8 7.7-8.2 29.6-4.8-6.5zM630.6 572.8l4.8 7.4-8.1 28.6-4.8-6.3zM662.8 578.9l4.8 7.1-8.2 27.6-4.8-6.1z"/>
<path fill="#0064ff" stroke="#0064ff" d="M469.9 541.4l4.8 9-8.2 35.4-4.8-7.4zM502 547.9l4.8 8.6-8.2 33.7-4.8-7.2zM534.2 554.3l4.8 8.2-8.2 32.2-4.8-6.9zM566.3 560.6l4.8 7.9-8.1 30.8-4.8-6.7z"/>
<path fill="#0068ff" stroke="#0068ff" d="M272.1 483.6l4.8 14-8.1 61.2-4.8-11.6z"/>
<path fill="#0070ff" stroke="#0070ff" d="M722.3 583.8l4.8 7-8.2 26.8-4.8-6.1zM754.5 589.9l4.7 6.7-8.1 26.1-4.8-6z"/>
<path fill="#0074ff" stroke="#0074ff" d="M690.1 577.7l4.8 7.1-8.1 27.7-4.8-6.2z"/>
<path fill="#0078ff" stroke="#0078ff" d="M304.3 493.3l4.8 12.6-8.2 54-4.8-10.7zM625.8 565.3l4.8 7.5-8.1 29.7-4.8-6.6zM658 571.5l4.8 7.4-8.2 28.6-4.8-6.4z"/>
<path fill="#007cff" stroke="#007cff" d="M593.7 558.9l4.8 7.8-8.2 30.8-4.8-6.8z"/>
<path fill="#0080ff" stroke="#0080ff" d="M336.4 502l4.8 11.6-8.1 48.8-4.8-9.9zM497.2 539.2l4.8 8.7-8.2 35.1-4.8-7.6zM529.4 545.9l4.8 8.4-8.2 33.5-4.8-7.4zM561.5 552.5l4.8 8.1-8.1 32-4.8-7.1z"/>
<path fill="#0083ff" stroke="#0083ff" d="M368.6 510.1l4.8 10.8-8.2 44.9-4.8-9.3zM400.7 517.8l4.8 10.2-8.1 41.7-4.8-8.8zM432.9 525.2l4.8 9.6-8.2 39.1-4.8-8.3zM465.1 532.3l4.8 9.1-8.2 37-4.8-8zM749.7 582.9l4.8 7-8.2 26.8-4.8-6.2zM781.8 589.1l4.8 6.7-8.2 26.1-4.8-6z"/>
<path fill="#0087ff" stroke="#0087ff" d="M717.5 576.7l4.8 7.1-8.2 27.7-4.8-6.4z"/>
<path fill="#008bff" stroke="#008bff" d="M685.3 570.4l4.8 7.3-8.1 28.6-4.8-6.6z"/>
<path fill="#008fff" stroke="#008fff" d="M235.2 456.7l4.8 15.7-8.2 75.6-4.8-15zM653.2 564l4.8 7.5-8.2 29.6-4.8-6.7z"/>
<path fill="#0093ff" stroke="#0093ff" d="M621 557.6l4.8 7.7-8.1 30.6-4.8-6.9z"/>
<path fill="#0097ff" stroke="#0097ff" d="M588.9 551l4.8 7.9-8.2 31.8-4.8-7.1zM777 582.2l4.8 6.9-8.2 26.8-4.8-6.3z"/>
<path fill="#009bff" stroke="#009bff" d="M556.7 544.2l4.8 8.3-8.1 33-4.8-7.3zM744.9 575.9l4.8 7-8.2 27.6-4.8-6.4z"/>
<path fill="#009fff" stroke="#009fff" d="M524.6 537.3l4.8 8.6-8.2 34.5-4.8-7.6z"/>
<path fill="#00a3ff" stroke="#00a3ff" d="M267.3 469.7l4.8 13.9-8.1 63.6-4.8-13.1zM460.3 523l4.8 9.3-8.2 38.1-4.8-8.3zM492.4 530.3l4.8 8.9-8.2 36.2-4.8-8zM712.7 569.5l4.8 7.2-8.2 28.4-4.8-6.5z"/>
<path fill="#00a7ff" stroke="#00a7ff" d="M428.1 515.5l4.8 9.7-8.2 40.4-4.8-8.8zM680.5 563l4.8 7.4-8.1 29.3-4.8-6.7z"/>
<path fill="#00abff" stroke="#00abff" d="M299.5 480.6l4.8 12.7-8.2 55.9-4.8-11.7zM331.6 490.4l4.8 11.6-8.1 50.5-4.8-10.7zM363.8 499.3l4.8 10.8-8.2 46.4-4.8-9.9zM395.9 507.6l4.8 10.2-8.1 43.1-4.8-9.3zM648.4 556.5l4.8 7.5-8.2 30.4-4.8-7z"/>
<path fill="#00afff" stroke="#00afff" d="M616.2 549.7l4.8 7.9-8.1 31.4-4.8-7.2zM772.2 575.3l4.8 6.9-8.2 27.4-4.8-6.4z"/>
<path fill="#00b3ff" stroke="#00b3ff" d="M584.1 542.9l4.8 8.1-8.2 32.6-4.8-7.5z"/>
<path fill="#00b7ff" stroke="#00b7ff" d="M740.1 568.8l4.8 7.1-8.2 28.2-4.8-6.6z"/>
<path fill="#00bbff" stroke="#00bbff" d="M551.9 535.9l4.8 8.3-8.1 34-4.8-7.7zM707.9 562.2l4.8 7.3-8.2 29.1-4.8-6.8z"/>
<path fill="#00bfff" stroke="#00bfff" d="M519.8 528.7l4.8 8.6-8.2 35.5-4.8-8zM675.7 555.6l4.8 7.4-8.1 30-4.8-7z"/>
<path fill="#00c3ff" stroke="#00c3ff" d="M198.2 422.7l4.8 16.9-8.2 99.5-4.7-22.3zM487.6 521.3l4.8 9-8.2 37.1-4.8-8.4z"/>
<path fill="#00c7ff" stroke="#00c7ff" d="M643.6 548.8l4.8 7.7-8.2 30.9-4.8-7.2z"/>
<path fill="#00cbff" stroke="#00cbff" d="M455.5 513.6l4.8 9.4-8.2 39.1-4.8-8.8zM611.4 541.8l4.8 7.9-8.1 32.1-4.8-7.4zM767.4 568.3l4.8 7-8.2 27.9-4.8-6.6z"/>
<path fill="#00cfff" stroke="#00cfff" d="M423.3 505.7l4.8 9.8-8.2 41.3-4.8-9.3zM735.3 561.6l4.8 7.2-8.2 28.7-4.8-6.7z"/>
<path fill="#00d3ff" stroke="#00d3ff" d="M391.1 497.3l4.8 10.3-8.1 44-4.8-9.8zM579.3 534.8l4.8 8.1-8.2 33.2-4.8-7.6z"/>
<path fill="#00d7ff" stroke="#00d7ff" d="M703.1 554.9l4.8 7.3-8.2 29.6-4.8-7z"/>
<path fill="#00dbff" stroke="#00dbff" d="M359 488.4l4.8 10.9-8.2 47.3-4.8-10.6zM547.1 527.5l4.8 8.4-8.1 34.6-4.8-8zM670.9 548l4.8 7.6-8.1 30.4-4.8-7.1z"/>
<path fill="#00dfff" stroke="#00dfff" d="M326.8 478.8l4.8 11.6-8.1 51.4-4.8-11.5zM515 520l4.8 8.7-8.2 36.1-4.8-8.3z"/>
<path fill="#00e3ff" stroke="#00e3ff" d="M230.4 441.7l4.8 15-8.2 76.3-4.8-17.2zM294.7 468.2l4.8 12.4-8.2 56.9-4.8-12.7zM638.8 541l4.8 7.8-8.2 31.4-4.8-7.4zM762.6 561.2l4.8 7.1-8.2 28.3-4.7-6.7z"/>
<path fill="#00e7ff" stroke="#00e7ff" d="M262.5 456.2l4.8 13.5-8.1 64.4-4.8-14.4zM482.8 512.3l4.8 9-8.2 37.7-4.7-8.6z"/>
<path fill="#00ebff" stroke="#00ebff" d="M606.6 533.9l4.8 7.9-8.1 32.6-4.8-7.7zM730.5 554.4l4.8 7.2-8.2 29.2-4.8-7z"/>
<path fill="#00efff" stroke="#00efff" d="M450.7 504.3l4.8 9.3-8.2 39.7-4.8-9.1z"/>
<path fill="#00f3ff" stroke="#00f3ff" d="M574.5 526.6l4.8 8.2-8.2 33.7-4.8-7.9zM698.3 547.5l4.8 7.4-8.2 29.9-4.8-7.1z"/>
<path fill="#00f7ff" stroke="#00f7ff" d="M418.5 495.9l4.8 9.8-8.2 41.8-4.8-9.6zM790 560.9l4.8 7-8.2 27.9-4.8-6.7z"/>
<path fill="#00fbff" stroke="#00fbff" d="M542.3 519.1l4.8 8.4-8.1 35-4.8-8.2zM666.2 540.5l4.7 7.5-8.1 30.9-4.8-7.4z"/>
<path fill="#00ffff" stroke="#00ffff" d="M386.3 487.1l4.8 10.2-8.1 44.5-4.8-10.3zM757.8 554.1l4.8 7.1-8.1 28.7-4.8-7z"/>
<path fill="#04fffb" stroke="#04fffb" d="M510.2 511.3l4.8 8.7-8.2 36.5-4.8-8.6zM634 533.3l4.8 7.7-8.2 31.8-4.8-7.5z"/>
<path fill="#08fff7" stroke="#08fff7" d="M725.7 547.2l4.8 7.2-8.2 29.4-4.8-7.1z"/>
<path fill="#0cfff3" stroke="#0cfff3" d="M354.2 477.7l4.8 10.7-8.2 47.6-4.8-11zM601.8 526l4.8 7.9-8.1 32.8-4.8-7.8z"/>
<path fill="#10ffef" stroke="#10ffef" d="M478 503.3l4.8 9-8.1 38.1-4.8-9zM693.5 540.1l4.8 7.4-8.2 30.2-4.8-7.3z"/>
<path fill="#14ffeb" stroke="#14ffeb" d="M322 467.5l4.8 11.3-8.1 51.5-4.8-12zM569.7 518.4l4.8 8.2-8.2 34-4.8-8.1zM785.2 553.9l4.8 7-8.2 28.2-4.8-6.9z"/>
<path fill="#18ffe7" stroke="#18ffe7" d="M445.9 495l4.8 9.3-8.2 39.9-4.8-9.4zM661.4 532.9l4.8 7.6-8.2 31-4.8-7.5z"/>
<path fill="#1cffe3" stroke="#1cffe3" d="M753 547l4.8 7.1-8.1 28.8-4.8-7z"/>
<path fill="#20ffdf" stroke="#20ffdf" d="M289.9 456.2l4.8 12-8.2 56.6-4.8-13.3zM537.5 510.7l4.8 8.4-8.1 35.2-4.8-8.4z"/>
<path fill="#24ffdb" stroke="#24ffdb" d="M413.7 486.3l4.8 9.6-8.2 42-4.8-9.9zM629.2 525.6l4.8 7.7-8.2 32-4.8-7.7zM720.9 539.9l4.8 7.3-8.2 29.5-4.8-7.2z"/>
<path fill="#28ffd7" stroke="#28ffd7" d="M505.4 502.7l4.8 8.6-8.2 36.6-4.8-8.7z"/>
<path fill="#2cffd3" stroke="#2cffd3" d="M257.7 443.3l4.8 12.9-8.1 63.5-4.8-15.3zM597 518.1l4.8 7.9-8.1 32.9-4.8-7.9zM688.7 532.7l4.8 7.4-8.2 30.3-4.8-7.4zM780.4 547l4.8 6.9-8.2 28.3-4.8-6.9z"/>
<path fill="#30ffcf" stroke="#30ffcf" d="M381.6 477l4.7 10.1-8.1 44.4-4.8-10.6z"/>
<path fill="#34ffcb" stroke="#34ffcb" d="M473.2 494.5l4.8 8.8-8.1 38.1-4.8-9.1z"/>
<path fill="#38ffc7" stroke="#38ffc7" d="M564.9 510.3l4.8 8.1-8.2 34.1-4.8-8.3zM656.6 525.4l4.8 7.5-8.2 31.1-4.8-7.5zM748.2 539.9l4.8 7.1-8.1 28.9-4.8-7.1z"/>
<path fill="#3cffc3" stroke="#3cffc3" d="M225.6 427.9l4.8 13.8-8.2 74.1-4.8-18.7zM349.4 467.2l4.8 10.5-8.2 47.3-4.8-11.4z"/>
<path fill="#40ffbf" stroke="#40ffbf" d="M441.1 485.8l4.8 9.2-8.2 39.8-4.8-9.6zM624.4 517.9l4.8 7.7-8.2 32-4.8-7.9zM716.1 532.7l4.8 7.2-8.2 29.6-4.8-7.3z"/>
<path fill="#44ffbb" stroke="#44ffbb" d="M193.4 408l4.8 14.7-8.1 94.1-4.8-26.3zM532.7 502.4l4.8 8.3-8.1 35.2-4.8-8.6z"/>
<path fill="#48ffb7" stroke="#48ffb7" d="M775.6 540l4.8 7-8.2 28.3-4.8-7z"/>
<path fill="#4cffb3" stroke="#4cffb3" d="M317.2 456.5l4.8 11-8.1 50.8-4.8-12.4zM592.2 510.2l4.8 7.9-8.1 32.9-4.8-8.1zM683.9 525.4l4.8 7.3-8.2 30.3-4.8-7.4z"/>
<path fill="#50ffaf" stroke="#50ffaf" d="M408.9 476.8l4.8 9.5-8.2 41.7-4.8-10.2zM500.6 494.2l4.8 8.5-8.2 36.5-4.8-8.9z"/>
<path fill="#54ffab" stroke="#54ffab" d="M743.4 532.9l4.8 7-8.1 28.9-4.8-7.2z"/>
<path fill="#58ffa7" stroke="#58ffa7" d="M560.1 502.4l4.8 7.9-8.2 33.9-4.8-8.3zM651.8 517.9l4.8 7.5-8.2 31.1-4.8-7.7z"/>
<path fill="#5cffa3" stroke="#5cffa3" d="M468.4 485.7l4.8 8.8-8.1 37.8-4.8-9.3zM711.3 525.6l4.8 7.1-8.2 29.5-4.8-7.3z"/>
<path fill="#60ff9f" stroke="#60ff9f" d="M285.1 444.7l4.8 11.5-8.2 55.3-4.8-13.9zM376.8 467.3l4.8 9.7-8.2 43.9-4.8-10.8zM619.6 510.3l4.8 7.6-8.2 31.8-4.8-7.9z"/>
<path fill="#64ff9b" stroke="#64ff9b" d="M770.8 533.2l4.8 6.8-8.2 28.3-4.8-7.1z"/>
<path fill="#68ff97" stroke="#68ff97" d="M527.9 494.3l4.8 8.1-8.1 34.9-4.8-8.6zM679.1 518.1l4.8 7.3-8.2 30.2-4.8-7.6z"/>
<path fill="#6cff93" stroke="#6cff93" d="M436.3 476.9l4.8 8.9-8.2 39.4-4.8-9.7z"/>
<path fill="#70ff8f" stroke="#70ff8f" d="M344.6 457.1l4.8 10.1-8.2 46.4-4.8-11.6zM587.4 502.5l4.8 7.7-8.1 32.7-4.8-8.1zM738.6 525.9l4.8 7-8.1 28.7-4.8-7.2z"/>
<path fill="#74ff8b" stroke="#74ff8b" d="M495.8 485.9l4.8 8.3-8.2 36.1-4.8-9zM647 510.6l4.8 7.3-8.2 30.9-4.8-7.8zM798.1 533.6l4.8 6.7-8.1 27.6-4.8-7z"/>
<path fill="#78ff87" stroke="#78ff87" d="M252.9 431.3l4.8 12-8.1 61.1-4.8-15.9z"/>
<path fill="#7cff83" stroke="#7cff83" d="M404.1 467.6l4.8 9.2-8.2 41-4.8-10.2zM555.3 494.5l4.8 7.9-8.2 33.5-4.8-8.4zM706.5 518.5l4.8 7.1-8.2 29.3-4.8-7.4z"/>
<path fill="#80ff80" stroke="#80ff80" d="M614.8 502.8l4.8 7.5-8.2 31.5-4.8-7.9zM766 526.4l4.8 6.8-8.2 28-4.8-7.1z"/>
<path fill="#83ff7c" stroke="#83ff7c" d="M463.6 477.2l4.8 8.5-8.1 37.3-4.8-9.4z"/>
<path fill="#87ff78" stroke="#87ff78" d="M312.4 446.1l4.8 10.4-8.1 49.4-4.8-12.6zM674.3 511l4.8 7.1-8.2 29.9-4.7-7.5z"/>
<path fill="#8bff74" stroke="#8bff74" d="M523.1 486.3l4.8 8-8.1 34.4-4.8-8.7zM733.8 519l4.8 6.9-8.1 28.5-4.8-7.2z"/>
<path fill="#8fff70" stroke="#8fff70" d="M372 457.9l4.8 9.4-8.2 42.8-4.8-10.8zM582.6 494.9l4.8 7.6-8.1 32.3-4.8-8.2zM793.3 526.9l4.8 6.7-8.1 27.3-4.8-7z"/>
<path fill="#93ff6c" stroke="#93ff6c" d="M431.5 468.2l4.8 8.7-8.2 38.6-4.8-9.8zM642.2 503.3l4.8 7.3-8.2 30.4-4.8-7.7z"/>
<path fill="#97ff68" stroke="#97ff68" d="M220.8 415.5l4.8 12.4-8.2 69.2-4.8-19.5zM701.7 511.6l4.8 6.9-8.2 29-4.8-7.4z"/>
<path fill="#9bff64" stroke="#9bff64" d="M491 477.8l4.8 8.1-8.2 35.4-4.8-9zM761.2 519.7l4.8 6.7-8.2 27.7-4.8-7.1z"/>
<path fill="#9fff60" stroke="#9fff60" d="M280.3 434l4.8 10.7-8.2 52.9-4.8-14zM550.5 486.8l4.8 7.7-8.2 33-4.8-8.4z"/>
<path fill="#a3ff5c" stroke="#a3ff5c" d="M339.8 447.4l4.8 9.7-8.2 44.9-4.8-11.6zM610 495.5l4.8 7.3-8.2 31.1-4.8-7.9zM669.5 504l4.8 7-8.1 29.5-4.8-7.6z"/>
<path fill="#a7ff58" stroke="#a7ff58" d="M399.3 458.8l4.8 8.8-8.2 40-4.8-10.3zM729 512.3l4.8 6.7-8.1 28.2-4.8-7.3z"/>
<path fill="#abff54" stroke="#abff54" d="M458.8 469l4.8 8.2-8.1 36.4-4.8-9.3zM788.5 520.4l4.8 6.5-8.1 27-4.8-6.9z"/>
<path fill="#afff50" stroke="#afff50" d="M518.3 478.5l4.8 7.8-8.1 33.7-4.8-8.7zM577.9 487.5l4.7 7.4-8.1 31.7-4.8-8.2z"/>
<path fill="#b3ff4c" stroke="#b3ff4c" d="M637.4 496.2l4.8 7.1-8.2 30-4.8-7.7zM696.9 504.7l4.8 6.9-8.2 28.5-4.8-7.4z"/>
<path fill="#b7ff48" stroke="#b7ff48" d="M756.4 513.1l4.8 6.6-8.2 27.3-4.8-7.1z"/>
<path fill="#bfff40" stroke="#bfff40" d="M307.6 436.2l4.8 9.9-8.1 47.2-4.8-12.7zM367.2 448.9l4.8 9-8.2 41.4-4.8-10.9zM426.7 459.9l4.8 8.3-8.2 37.5-4.8-9.8zM486.2 469.9l4.8 7.9-8.2 34.5-4.8-9zM545.7 479.3l4.8 7.5-8.2 32.3-4.8-8.4z"/>
<path fill="#c3ff3c" stroke="#c3ff3c" d="M248.1 420.3l4.8 11-8.1 57.2-4.8-16.1zM605.2 488.4l4.8 7.1-8.2 30.5-4.8-7.9zM664.7 497.1l4.8 6.9-8.1 28.9-4.8-7.5zM724.2 505.6l4.8 6.7-8.1 27.6-4.8-7.2z"/>
<path fill="#c7ff38" stroke="#c7ff38" d="M783.7 514l4.8 6.4-8.1 26.6-4.8-7z"/>
<path fill="#cfff30" stroke="#cfff30" d="M188.6 395.8l4.8 12.2-8.1 82.5-4.8-28zM573.1 480.3l4.8 7.2-8.2 30.9-4.8-8.1z"/>
<path fill="#d3ff2c" stroke="#d3ff2c" d="M394.5 450.3l4.8 8.5-8.2 38.5-4.8-10.2zM454 461l4.8 8-8.1 35.3-4.8-9.3zM513.5 470.9l4.8 7.6-8.1 32.8-4.8-8.6zM632.6 489.3l4.8 6.9-8.2 29.4-4.8-7.7zM692.1 498.1l4.8 6.6-8.2 28-4.8-7.3zM751.6 506.6l4.8 6.5-8.2 26.8-4.8-7z"/>
<path fill="#d7ff28" stroke="#d7ff28" d="M335 438.3l4.8 9.1-8.2 43-4.8-11.6z"/>
<path fill="#dfff20" stroke="#dfff20" d="M275.5 424l4.8 10-8.2 49.6-4.8-13.9zM600.4 481.4l4.8 7-8.2 29.7-4.8-7.9zM659.9 490.4l4.8 6.7-8.1 28.3-4.8-7.5zM719.4 499.2l4.8 6.4-8.1 27.1-4.8-7.1zM778.9 507.7l4.8 6.3-8.1 26-4.8-6.8z"/>
<path fill="#e3ff1c" stroke="#e3ff1c" d="M481.4 462.3l4.8 7.6-8.2 33.4-4.8-8.8zM540.9 472.1l4.8 7.2-8.2 31.4-4.8-8.3z"/>
<path fill="#e7ff18" stroke="#e7ff18" d="M421.9 451.9l4.8 8-8.2 36-4.8-9.6z"/>
<path fill="#ebff14" stroke="#ebff14" d="M362.4 440.4l4.8 8.5-8.2 39.5-4.8-10.7z"/>
<path fill="#efff10" stroke="#efff10" d="M627.8 482.6l4.8 6.7-8.2 28.6-4.8-7.6zM687.3 491.6l4.8 6.5-8.2 27.3-4.8-7.3zM746.8 500.3l4.8 6.3-8.2 26.3-4.8-7zM806.3 508.9l4.8 6.1-8.2 25.3-4.8-6.7z"/>
<path fill="#f3ff0c" stroke="#f3ff0c" d="M216 404.6l4.8 10.9-8.2 62.1-4.8-19.5zM508.7 463.7l4.8 7.2-8.1 31.8-4.8-8.5zM568.3 473.4l4.8 6.9-8.2 30-4.8-7.9z"/>
<path fill="#f7ff08" stroke="#f7ff08" d="M302.8 427.1l4.8 9.1-8.1 44.4-4.8-12.4zM449.2 453.4l4.8 7.6-8.1 34-4.8-9.2z"/>
<path fill="#fbff04" stroke="#fbff04" d="M714.6 492.9l4.8 6.3-8.1 26.4-4.8-7.1zM774.1 501.6l4.8 6.1-8.1 25.5-4.8-6.8z"/>
<path fill="#ffff00" stroke="#ffff00" d="M389.7 442.3l4.8 8-8.2 36.8-4.7-10.1zM595.6 474.7l4.8 6.7-8.2 28.8-4.8-7.7zM655.1 483.9l4.8 6.5-8.1 27.5-4.8-7.3z"/>
<path fill="#fffb00" stroke="#fffb00" d="M536.1 465.1l4.8 7-8.2 30.3-4.8-8.1z"/>
<path fill="#fff700" stroke="#fff700" d="M476.6 455l4.8 7.3-8.2 32.2-4.8-8.8zM742 494.2l4.8 6.1-8.2 25.6-4.8-6.9zM801.5 502.9l4.8 6-8.2 24.7-4.8-6.7z"/>
<path fill="#fff300" stroke="#fff300" d="M243.3 410.5l4.8 9.8-8.1 52.1-4.8-15.7zM330.2 429.8l4.8 8.5-8.2 40.5-4.8-11.3zM682.5 485.3l4.8 6.3-8.2 26.5-4.8-7.1z"/>
<path fill="#ffef00" stroke="#ffef00" d="M417.1 444.2l4.8 7.7-8.2 34.4-4.8-9.5zM623 476.1l4.8 6.5-8.2 27.7-4.8-7.5z"/>
<path fill="#ffeb00" stroke="#ffeb00" d="M563.5 466.6l4.8 6.8-8.2 29-4.8-7.9zM769.4 495.6l4.7 6-8.1 24.8-4.8-6.7z"/>
<path fill="#ffe700" stroke="#ffe700" d="M503.9 456.7l4.8 7-8.1 30.5-4.8-8.3zM709.8 486.7l4.8 6.2-8.1 25.6-4.8-6.9z"/>
<path fill="#ffe300" stroke="#ffe300" d="M270.7 415l4.8 9-8.2 45.7-4.8-13.5zM357.6 432.4l4.8 8-8.2 37.3-4.8-10.5zM650.3 477.6l4.8 6.3-8.1 26.7-4.8-7.3z"/>
<path fill="#ffdf00" stroke="#ffdf00" d="M444.4 446.2l4.8 7.2-8.1 32.4-4.8-8.9zM590.8 468.2l4.8 6.5-8.2 27.8-4.8-7.6zM796.7 497.1l4.8 5.8-8.2 24-4.8-6.5z"/>
<path fill="#ffdb00" stroke="#ffdb00" d="M531.3 458.4l4.8 6.7-8.2 29.2-4.8-8zM737.2 488.2l4.8 6-8.2 24.8-4.8-6.7z"/>
<path fill="#ffd700" stroke="#ffd700" d="M384.9 434.8l4.8 7.5-8.1 34.7-4.8-9.7zM677.7 479.2l4.8 6.1-8.2 25.7-4.8-7z"/>
<path fill="#ffd300" stroke="#ffd300" d="M298 418.7l4.8 8.4-8.1 41.1-4.8-12zM471.8 448.1l4.8 6.9-8.2 30.7-4.8-8.5zM618.2 469.9l4.8 6.2-8.2 26.7-4.8-7.3z"/>
<path fill="#ffcf00" stroke="#ffcf00" d="M558.7 460.2l4.8 6.4-8.2 27.9-4.8-7.7zM705 480.8l4.8 5.9-8.1 24.9-4.8-6.9zM764.6 489.8l4.8 5.8-8.2 24.1-4.8-6.6z"/>
<path fill="#ffc700" stroke="#ffc700" d="M412.3 437.1l4.8 7.1-8.2 32.6-4.8-9.2zM499.1 450.1l4.8 6.6-8.1 29.2-4.8-8.1zM645.5 471.5l4.8 6.1-8.1 25.7-4.8-7.1zM791.9 491.4l4.8 5.7-8.2 23.3-4.8-6.4z"/>
<path fill="#ffc300" stroke="#ffc300" d="M325.4 422l4.8 7.8-8.2 37.7-4.8-11zM586 462l4.8 6.2-8.2 26.7-4.7-7.4zM732.4 482.5l4.8 5.7-8.2 24.1-4.8-6.7z"/>
<path fill="#ffbf00" stroke="#ffbf00" d="M672.9 473.3l4.8 5.9-8.2 24.8-4.8-6.9z"/>
<path fill="#ffbb00" stroke="#ffbb00" d="M439.6 439.3l4.8 6.9-8.1 30.7-4.8-8.7zM526.5 452l4.8 6.4-8.2 27.9-4.8-7.8z"/>
<path fill="#ffb700" stroke="#ffb700" d="M352.8 424.9l4.8 7.5-8.2 34.8-4.8-10.1zM613.4 463.8l4.8 6.1-8.2 25.6-4.8-7.1zM759.8 484.2l4.8 5.6-8.2 23.3-4.8-6.5z"/>
<path fill="#ffb300" stroke="#ffb300" d="M211.2 395.4l4.8 9.2-8.2 53.5-4.8-18.5zM700.2 475.1l4.8 5.7-8.1 23.9-4.8-6.6z"/>
<path fill="#ffaf00" stroke="#ffaf00" d="M238.5 401.9l4.8 8.6-8.1 46.2-4.8-15zM380.1 427.7l4.8 7.1-8.1 32.5-4.8-9.4zM467 441.5l4.8 6.6-8.2 29.1-4.8-8.2zM553.9 454l4.8 6.2-8.2 26.6-4.8-7.5zM640.7 465.7l4.8 5.8-8.1 24.7-4.8-6.9zM787.1 486l4.8 5.4-8.2 22.6-4.8-6.3z"/>
<path fill="#ffab00" stroke="#ffab00" d="M183.8 386.1l4.8 9.7-8.1 66.7-4.8-27.3zM727.6 476.9l4.8 5.6-8.2 23.1-4.8-6.4z"/>
<path fill="#ffa700" stroke="#ffa700" d="M265.9 406.9l4.8 8.1-8.2 41.2-4.8-12.9zM494.3 443.7l4.8 6.4-8.1 27.7-4.8-7.9zM581.2 456l4.8 6-8.1 25.5-4.8-7.2zM814.5 487.8l4.8 5.3-8.2 21.9-4.8-6.1z"/>
<path fill="#ffa300" stroke="#ffa300" d="M407.5 430.3l4.8 6.8-8.2 30.5-4.8-8.8zM668.1 467.6l4.8 5.7-8.2 23.8-4.8-6.7zM755 478.8l4.8 5.4-8.2 22.4-4.8-6.3z"/>
<path fill="#ff9f00" stroke="#ff9f00" d="M293.3 411.1l4.7 7.6-8.1 37.5-4.8-11.5z"/>
<path fill="#ff9b00" stroke="#ff9b00" d="M434.8 432.8l4.8 6.5-8.1 28.9-4.8-8.3zM521.7 445.9l4.8 6.1-8.2 26.5-4.8-7.6zM608.6 458l4.8 5.8-8.2 24.6-4.8-7zM695.4 469.6l4.8 5.5-8.1 23-4.8-6.5z"/>
<path fill="#ff9700" stroke="#ff9700" d="M320.6 414.7l4.8 7.3-8.2 34.5-4.8-10.4zM782.3 480.7l4.8 5.3-8.2 21.7-4.8-6.1z"/>
<path fill="#ff9300" stroke="#ff9300" d="M549.1 448.1l4.8 5.9-8.2 25.3-4.8-7.2zM635.9 460.1l4.8 5.6-8.1 23.6-4.8-6.7zM722.8 471.5l4.8 5.4-8.2 22.3-4.8-6.3z"/>
<path fill="#ff8f00" stroke="#ff8f00" d="M348 418l4.8 6.9-8.2 32.2-4.8-9.7zM462.2 435.3l4.8 6.2-8.2 27.5-4.8-8zM809.7 482.6l4.8 5.2-8.2 21.1-4.8-6z"/>
<path fill="#ff8b00" stroke="#ff8b00" d="M576.4 450.3l4.8 5.7-8.1 24.3-4.8-6.9zM663.3 462.2l4.8 5.4-8.2 22.8-4.8-6.5zM750.2 473.5l4.8 5.3-8.2 21.5-4.8-6.1z"/>
<path fill="#ff8700" stroke="#ff8700" d="M375.3 421.1l4.8 6.6-8.1 30.2-4.8-9zM489.5 437.7l4.8 6-8.1 26.2-4.8-7.6z"/>
<path fill="#ff8300" stroke="#ff8300" d="M603.8 452.5l4.8 5.5-8.2 23.4-4.8-6.7zM690.6 464.3l4.8 5.3-8.1 22-4.8-6.3zM777.5 475.6l4.8 5.1-8.2 20.9-4.7-6z"/>
<path fill="#ff8000" stroke="#ff8000" d="M402.7 424l4.8 6.3-8.2 28.5-4.8-8.5zM516.9 440.1l4.8 5.8-8.2 25-4.8-7.2z"/>
<path fill="#ff7c00" stroke="#ff7c00" d="M430 426.8l4.8 6-8.1 27.1-4.8-8zM631.1 454.7l4.8 5.4-8.1 22.5-4.8-6.5zM718 466.4l4.8 5.1-8.2 21.4-4.8-6.2zM804.9 477.7l4.8 4.9-8.2 20.3-4.8-5.8z"/>
<path fill="#ff7800" stroke="#ff7800" d="M544.3 442.5l4.8 5.6-8.2 24-4.8-7z"/>
<path fill="#ff7400" stroke="#ff7400" d="M261.1 399.7l4.8 7.2-8.2 36.4-4.8-12zM457.4 429.5l4.8 5.8-8.2 25.7-4.8-7.6zM571.6 444.9l4.8 5.4-8.1 23.1-4.8-6.8zM658.5 456.9l4.8 5.3-8.2 21.7-4.8-6.3zM745.4 468.5l4.8 5-8.2 20.7-4.8-6z"/>
<path fill="#ff7000" stroke="#ff7000" d="M233.7 394.4l4.8 7.5-8.1 39.8-4.8-13.8zM288.5 404.2l4.8 6.9-8.2 33.6-4.8-10.7zM315.8 408.2l4.8 6.5-8.2 31.4-4.8-9.9zM772.7 470.7l4.8 4.9-8.1 20-4.8-5.8z"/>
<path fill="#ff6c00" stroke="#ff6c00" d="M343.2 411.7l4.8 6.3-8.2 29.4-4.8-9.1zM484.8 432.1l4.7 5.6-8.1 24.6-4.8-7.3zM599 447.3l4.8 5.2-8.2 22.2-4.8-6.5zM685.8 459.2l4.8 5.1-8.1 21-4.8-6.1z"/>
<path fill="#ff6800" stroke="#ff6800" d="M512.1 434.7l4.8 5.4-8.2 23.6-4.8-7zM713.2 461.4l4.8 5-8.2 20.3-4.8-5.9zM800.1 472.9l4.8 4.8-8.2 19.4-4.8-5.7z"/>
<path fill="#ff6400" stroke="#ff6400" d="M206.4 387.7l4.8 7.7-8.2 44.2-4.8-16.9zM370.5 415l4.8 6.1-8.1 27.8-4.8-8.5zM626.3 449.6l4.8 5.1-8.1 21.4-4.8-6.2z"/>
<path fill="#ff6000" stroke="#ff6000" d="M397.9 418.2l4.8 5.8-8.2 26.3-4.8-8zM539.5 437.2l4.8 5.3-8.2 22.6-4.8-6.7zM653.7 452l4.8 4.9-8.2 20.7-4.8-6.1zM740.6 463.7l4.8 4.8-8.2 19.7-4.8-5.7z"/>
<path fill="#ff5c00" stroke="#ff5c00" d="M425.2 421.1l4.8 5.7-8.1 25.1-4.8-7.7zM767.9 466l4.8 4.7-8.1 19.1-4.8-5.6z"/>
<path fill="#ff5800" stroke="#ff5800" d="M452.6 424l4.8 5.5-8.2 23.9-4.8-7.2zM566.8 439.7l4.8 5.2-8.1 21.7-4.8-6.4zM681.1 454.3l4.7 4.9-8.1 20-4.8-5.9z"/>
<path fill="#ff5400" stroke="#ff5400" d="M594.2 442.2l4.8 5.1-8.2 20.9-4.8-6.2zM708.4 456.7l4.8 4.7-8.2 19.4-4.8-5.7zM795.3 468.2l4.8 4.7-8.2 18.5-4.8-5.4z"/>
<path fill="#ff5000" stroke="#ff5000" d="M480 426.8l4.8 5.3-8.2 22.9-4.8-6.9zM621.5 444.7l4.8 4.9-8.1 20.3-4.8-6.1zM822.6 470.5l4.8 4.6-8.1 18-4.8-5.3z"/>
<path fill="#ff4c00" stroke="#ff4c00" d="M507.3 429.5l4.8 5.2-8.2 22-4.8-6.6zM735.8 459l4.8 4.7-8.2 18.8-4.8-5.6z"/>
<path fill="#ff4800" stroke="#ff4800" d="M283.7 398.1l4.8 6.1-8.2 29.8-4.8-10zM311 402.2l4.8 6-8.2 28-4.8-9.1zM338.4 406l4.8 5.7-8.2 26.6-4.8-8.5zM534.7 432.2l4.8 5-8.2 21.2-4.8-6.4zM648.9 447.2l4.8 4.8-8.2 19.5-4.8-5.8zM763.1 461.4l4.8 4.6-8.1 18.2-4.8-5.4z"/>
<path fill="#ff4400" stroke="#ff4400" d="M256.3 393.4l4.8 6.3-8.2 31.6-4.8-11zM365.7 409.4l4.8 5.6-8.1 25.4-4.8-8zM393.1 412.7l4.8 5.5-8.2 24.1-4.8-7.5zM562 434.9l4.8 4.8-8.1 20.5-4.8-6.2zM676.3 449.7l4.8 4.6-8.2 19-4.8-5.7zM790.5 463.8l4.8 4.4-8.2 17.8-4.8-5.3z"/>
<path fill="#ff4000" stroke="#ff4000" d="M420.4 415.9l4.8 5.2-8.1 23.1-4.8-7.1zM589.4 437.5l4.8 4.7-8.2 19.8-4.8-6zM703.6 452.1l4.8 4.6-8.2 18.4-4.8-5.5z"/>
<path fill="#ff3c00" stroke="#ff3c00" d="M447.8 418.9l4.8 5.1-8.2 22.2-4.8-6.9zM731 454.6l4.8 4.4-8.2 17.9-4.8-5.4zM817.8 466.2l4.8 4.3-8.1 17.3-4.8-5.2z"/>
<path fill="#ff3800" stroke="#ff3800" d="M179 378.7l4.8 7.4-8.1 49.1-4.8-24zM228.9 388l4.8 6.4-8.1 33.5-4.8-12.4zM475.2 421.8l4.8 5-8.2 21.3-4.8-6.6zM616.7 440.1l4.8 4.6-8.1 19.1-4.8-5.8z"/>
<path fill="#ff3400" stroke="#ff3400" d="M502.5 424.7l4.8 4.8-8.2 20.6-4.8-6.4zM644.1 442.7l4.8 4.5-8.2 18.5-4.8-5.6zM758.3 457.1l4.8 4.3-8.1 17.4-4.8-5.3z"/>
<path fill="#ff3000" stroke="#ff3000" d="M529.9 427.5l4.8 4.7-8.2 19.8-4.8-6.1zM671.5 445.2l4.8 4.5-8.2 17.9-4.8-5.4zM785.7 459.5l4.8 4.3-8.2 16.9-4.8-5.1z"/>
<path fill="#ff2c00" stroke="#ff2c00" d="M557.2 430.3l4.8 4.6-8.1 19.1-4.8-5.9zM698.8 447.8l4.8 4.3-8.2 17.5-4.8-5.3zM813 462l4.8 4.2-8.1 16.4-4.8-4.9z"/>
<path fill="#ff2800" stroke="#ff2800" d="M333.6 400.7l4.8 5.3-8.2 23.8-4.8-7.8zM360.9 404.3l4.8 5.1-8.1 23-4.8-7.5zM388.3 407.7l4.8 5-8.2 22.1-4.8-7.1zM584.6 433l4.8 4.5-8.2 18.5-4.8-5.7zM611.9 435.7l4.8 4.4-8.1 17.9-4.8-5.5zM726.2 450.4l4.8 4.2-8.2 16.9-4.8-5.1z"/>
<path fill="#ff2400" stroke="#ff2400" d="M306.2 396.9l4.8 5.3-8.2 24.9-4.8-8.4zM415.6 411l4.8 4.9-8.1 21.2-4.8-6.8zM443 414.1l4.8 4.8-8.2 20.4-4.8-6.5zM639.3 438.4l4.8 4.3-8.2 17.4-4.8-5.4zM753.5 452.9l4.8 4.2-8.1 16.4-4.8-5z"/>
<path fill="#ff2000" stroke="#ff2000" d="M201.6 381.5l4.8 6.2-8.2 35-4.8-14.7zM278.9 392.6l4.8 5.5-8.2 25.9-4.8-9zM470.4 417.2l4.8 4.6-8.2 19.7-4.8-6.2zM497.7 420.1l4.8 4.6-8.2 19-4.8-6zM666.7 441l4.8 4.2-8.2 17-4.8-5.3zM780.9 455.5l4.8 4-8.2 16.1-4.8-4.9z"/>
<path fill="#ff1c00" stroke="#ff1c00" d="M525.1 423.1l4.8 4.4-8.2 18.4-4.8-5.8zM694 443.7l4.8 4.1-8.2 16.5-4.8-5.1zM808.2 458l4.8 4-8.1 15.7-4.8-4.8z"/>
<path fill="#ff1800" stroke="#ff1800" d="M251.5 388l4.8 5.4-8.2 26.9-4.8-9.8zM552.4 425.9l4.8 4.4-8.1 17.8-4.8-5.6zM579.8 428.7l4.8 4.3-8.2 17.3-4.8-5.4zM721.4 446.3l4.8 4.1-8.2 16-4.8-5z"/>
<path fill="#ff1400" stroke="#ff1400" d="M607.1 431.5l4.8 4.2-8.1 16.8-4.8-5.2zM748.7 448.9l4.8 4-8.1 15.6-4.8-4.8z"/>
<path fill="#ff1000" stroke="#ff1000" d="M634.5 434.3l4.8 4.1-8.2 16.3-4.8-5.1zM661.9 437l4.8 4-8.2 15.9-4.8-4.9zM776.1 451.6l4.8 3.9-8.2 15.2-4.8-4.7zM803.4 454.2l4.8 3.8-8.1 14.9-4.8-4.7z"/>
<path fill="#ff0c00" stroke="#ff0c00" d="M328.8 396l4.8 4.7-8.2 21.3-4.8-7.3zM356.1 399.6l4.8 4.7-8.1 20.6-4.8-6.9zM383.5 403.1l4.8 4.6-8.2 20-4.8-6.6zM410.8 406.5l4.8 4.5-8.1 19.3-4.8-6.3zM438.2 409.7l4.8 4.4-8.2 18.7-4.8-6zM465.6 412.8l4.8 4.4-8.2 18.1-4.8-5.8zM492.9 415.9l4.8 4.2-8.2 17.6-4.7-5.6zM689.2 439.7l4.8 4-8.2 15.5-4.7-4.9zM830.8 456.8l4.8 3.8-8.2 14.5-4.8-4.6z"/>
<path fill="#ff0800" stroke="#ff0800" d="M224.1 382.6l4.8 5.4-8.1 27.5-4.8-10.9zM301.4 392l4.8 4.9-8.2 21.8-4.7-7.6zM520.3 418.9l4.8 4.2-8.2 17-4.8-5.4zM547.6 421.8l4.8 4.1-8.1 16.6-4.8-5.3zM716.6 442.4l4.8 3.9-8.2 15.1-4.8-4.7zM743.9 445.1l4.8 3.8-8.1 14.8-4.8-4.7z"/>
<path fill="#ff0400" stroke="#ff0400" d="M575 424.7l4.8 4-8.2 16.2-4.8-5.2zM602.3 427.6l4.8 3.9-8.1 15.8-4.8-5.1zM771.3 447.8l4.8 3.8-8.2 14.4-4.8-4.6z"/>
<path fill="#ff0000" stroke="#ff0000" d="M274.1 387.8l4.8 4.8-8.2 22.4-4.8-8.1zM629.7 430.4l4.8 3.9-8.2 15.3-4.8-4.9zM657.1 433.2l4.8 3.8-8.2 15-4.8-4.8zM798.6 450.5l4.8 3.7-8.1 14-4.8-4.4zM826 453.2l4.8 3.6-8.2 13.7-4.8-4.3z"/>
<path fill="#fb0000" stroke="#fb0000" d="M684.4 436l4.8 3.7-8.1 14.6-4.8-4.6zM711.8 438.7l4.8 3.7-8.2 14.3-4.8-4.6z"/>
<path fill="#f70000" stroke="#f70000" d="M378.7 398.9l4.8 4.2-8.2 18-4.8-6.1zM406 402.3l4.8 4.2-8.1 17.5-4.8-5.8zM433.4 405.6l4.8 4.1-8.2 17.1-4.8-5.7zM460.8 408.8l4.8 4-8.2 16.7-4.8-5.5zM488.1 411.9l4.8 4-8.1 16.2-4.8-5.3zM515.5 414.9l4.8 4-8.2 15.8-4.8-5.2zM542.8 417.9l4.8 3.9-8.1 15.4-4.8-5zM739.1 441.5l4.8 3.6-8.1 13.9-4.8-4.4zM766.5 444.2l4.8 3.6-8.2 13.6-4.8-4.3z"/>
<path fill="#f30000" stroke="#f30000" d="M246.7 383.2l4.8 4.8-8.2 22.5-4.8-8.6zM351.3 395.4l4.8 4.2-8.1 18.4-4.8-6.3zM570.2 420.9l4.8 3.8-8.2 15-4.8-4.8zM597.5 423.8l4.8 3.8-8.1 14.6-4.8-4.7zM624.9 426.7l4.8 3.7-8.2 14.3-4.8-4.6zM793.8 447l4.8 3.5-8.1 13.3-4.8-4.3z"/>
<path fill="#ef0000" stroke="#ef0000" d="M324 391.7l4.8 4.3-8.2 18.7-4.8-6.5zM652.3 429.6l4.8 3.6-8.2 14-4.8-4.5zM679.6 432.4l4.8 3.6-8.1 13.7-4.8-4.5zM821.2 449.7l4.8 3.5-8.2 13-4.8-4.2z"/>
<path fill="#eb0000" stroke="#eb0000" d="M296.6 387.8l4.8 4.2-8.1 19.1-4.8-6.9zM707 435.2l4.8 3.5-8.2 13.4-4.8-4.3zM734.3 438l4.8 3.5-8.1 13.1-4.8-4.2z"/>
<path fill="#e70000" stroke="#e70000" d="M196.8 376.4l4.8 5.1-8.2 26.5-4.8-12.2zM428.6 401.8l4.8 3.8-8.2 15.5-4.8-5.2zM456 405l4.8 3.8-8.2 15.2-4.8-5.1zM483.3 408.2l4.8 3.7-8.1 14.9-4.8-5zM510.7 411.3l4.8 3.6-8.2 14.6-4.8-4.8zM538 414.3l4.8 3.6-8.1 14.3-4.8-4.7zM565.4 417.3l4.8 3.6-8.2 14-4.8-4.6zM761.7 440.8l4.8 3.4-8.2 12.9-4.8-4.2zM789 443.6l4.8 3.4-8.1 12.5-4.8-4zM816.4 446.3l4.8 3.4-8.2 12.3-4.8-4z"/>
<path fill="#e30000" stroke="#e30000" d="M219.3 378.1l4.8 4.5-8.1 22-4.8-9.2zM269.3 383.6l4.8 4.2-8.2 19.1-4.8-7.2zM373.9 395l4.8 3.9-8.2 16.1-4.8-5.6zM401.2 398.4l4.8 3.9-8.1 15.9-4.8-5.5zM592.8 420.3l4.7 3.5-8.1 13.7-4.8-4.5zM620.1 423.2l4.8 3.5-8.2 13.4-4.8-4.4zM647.5 426.1l4.8 3.5-8.2 13.1-4.8-4.3zM674.8 429l4.8 3.4-8.1 12.8-4.8-4.2z"/>
<path fill="#df0000" stroke="#df0000" d="M346.5 391.5l4.8 3.9-8.1 16.3-4.8-5.7zM702.2 431.8l4.8 3.4-8.2 12.6-4.8-4.1zM729.5 434.7l4.8 3.3-8.1 12.4-4.8-4.1zM756.9 437.5l4.8 3.3-8.2 12.1-4.8-4z"/>
<path fill="#db0000" stroke="#db0000" d="M174.2 373.2l4.8 5.5-8.1 32.5-4.8-18.9zM319.2 387.8l4.8 3.9-8.2 16.5-4.8-6zM784.3 440.3l4.7 3.3-8.1 11.9-4.8-3.9zM811.6 443.1l4.8 3.2-8.2 11.7-4.8-3.8z"/>
<path fill="#d70000" stroke="#d70000" d="M241.9 379.1l4.8 4.1-8.2 18.7-4.8-7.5zM423.8 398.2l4.8 3.6-8.2 14.1-4.8-4.9zM451.2 401.5l4.8 3.5-8.2 13.9-4.8-4.8zM478.5 404.7l4.8 3.5-8.1 13.6-4.8-4.6zM505.9 407.8l4.8 3.5-8.2 13.4-4.8-4.6zM533.2 410.9l4.8 3.4-8.1 13.2-4.8-4.4zM560.6 413.9l4.8 3.4-8.2 13-4.8-4.4zM588 416.9l4.8 3.4-8.2 12.7-4.8-4.3zM615.3 419.9l4.8 3.3-8.2 12.5-4.8-4.2zM642.7 422.8l4.8 3.3-8.2 12.3-4.8-4.1zM670 425.7l4.8 3.3-8.1 12-4.8-4zM839 445.9l4.8 3.2-8.2 11.5-4.8-3.8z"/>
<path fill="#d30000" stroke="#d30000" d="M291.8 383.9l4.8 3.9-8.1 16.4-4.8-6.1zM369.1 391.5l4.8 3.5-8.2 14.4-4.8-5.1zM396.5 394.9l4.7 3.5-8.1 14.3-4.8-5zM697.4 428.6l4.8 3.2-8.2 11.9-4.8-4zM724.7 431.5l4.8 3.2-8.1 11.6-4.8-3.9zM752.1 434.4l4.8 3.1-8.2 11.4-4.8-3.8zM779.5 437.2l4.8 3.1-8.2 11.3-4.8-3.8z"/>
<path fill="#cf0000" stroke="#cf0000" d="M341.7 387.9l4.8 3.6-8.1 14.5-4.8-5.3zM806.8 440l4.8 3.1-8.2 11.1-4.8-3.7zM834.2 442.9l4.8 3-8.2 10.9-4.8-3.6z"/>
<path fill="#cb0000" stroke="#cb0000" d="M264.5 379.8l4.8 3.8-8.2 16.1-4.8-6.3zM446.4 398.2l4.8 3.3-8.2 12.6-4.8-4.4zM473.7 401.4l4.8 3.3-8.1 12.5-4.8-4.4zM501.1 404.5l4.8 3.3-8.2 12.3-4.8-4.2zM528.4 407.6l4.8 3.3-8.1 12.2-4.8-4.2zM555.8 410.7l4.8 3.2-8.2 12-4.8-4.1zM583.2 413.7l4.8 3.2-8.2 11.8-4.8-4zM610.5 416.7l4.8 3.2-8.2 11.6-4.8-3.9zM637.9 419.7l4.8 3.1-8.2 11.5-4.8-3.9zM665.2 422.6l4.8 3.1-8.1 11.3-4.8-3.8zM692.6 425.5l4.8 3.1-8.2 11.1-4.8-3.7zM719.9 428.5l4.8 3-8.1 10.9-4.8-3.7zM747.3 431.3l4.8 3.1-8.2 10.7-4.8-3.6z"/>
<path fill="#c70000" stroke="#c70000" d="M314.4 384.3l4.8 3.5-8.2 14.4-4.8-5.3zM391.7 391.6l4.8 3.3-8.2 12.8-4.8-4.6zM419 394.9l4.8 3.3-8.2 12.8-4.8-4.5zM774.7 434.2l4.8 3-8.2 10.6-4.8-3.6zM802 437.1l4.8 2.9-8.2 10.5-4.8-3.5zM829.4 439.9l4.8 3-8.2 10.3-4.8-3.5z"/>
<path fill="#c30000" stroke="#c30000" d="M214.5 374.2l4.8 3.9-8.1 17.3-4.8-7.7zM287 380.5l4.8 3.4-8.1 14.2-4.8-5.5zM364.3 388.2l4.8 3.3-8.2 12.8-4.8-4.7zM551 407.6l4.8 3.1-8.2 11.1-4.8-3.9zM578.4 410.7l4.8 3-8.2 11-4.8-3.8zM605.7 413.7l4.8 3-8.2 10.9-4.8-3.8zM633.1 416.7l4.8 3-8.2 10.7-4.8-3.7zM660.4 419.7l4.8 2.9-8.1 10.6-4.8-3.6zM687.8 422.6l4.8 2.9-8.2 10.5-4.8-3.6z"/>
<path fill="#bf0000" stroke="#bf0000" d="M192 372.4l4.8 4-8.2 19.4-4.8-9.7zM237.1 375.5l4.8 3.6-8.2 15.3-4.8-6.4zM336.9 384.7l4.8 3.2-8.1 12.8-4.8-4.7zM441.6 395.1l4.8 3.1-8.2 11.5-4.8-4.1zM468.9 398.3l4.8 3.1-8.1 11.4-4.8-4zM496.3 401.4l4.8 3.1-8.2 11.4-4.8-4zM523.6 404.6l4.8 3-8.1 11.3-4.8-4zM715.1 425.5l4.8 3-8.1 10.2-4.8-3.5zM742.5 428.4l4.8 2.9-8.2 10.2-4.8-3.5zM769.9 431.3l4.8 2.9-8.2 10-4.8-3.4zM797.2 434.2l4.8 2.9-8.2 9.9-4.8-3.4zM824.6 437.1l4.8 2.8-8.2 9.8-4.8-3.4z"/>
<path fill="#bb0000" stroke="#bb0000" d="M414.2 391.8l4.8 3.1-8.2 11.6-4.8-4.2z"/>
<path fill="#b70000" stroke="#b70000" d="M259.7 376.5l4.8 3.3-8.2 13.6-4.8-5.4zM309.6 381.1l4.8 3.2-8.2 12.6-4.8-4.9zM359.5 385.1l4.8 3.1-8.2 11.4-4.8-4.2zM386.9 388.5l4.8 3.1-8.2 11.5-4.8-4.2zM491.5 398.5l4.8 2.9-8.2 10.5-4.8-3.7zM518.8 401.7l4.8 2.9-8.1 10.3-4.8-3.6zM546.2 404.7l4.8 2.9-8.2 10.3-4.8-3.6zM573.6 407.8l4.8 2.9-8.2 10.2-4.8-3.6zM600.9 410.8l4.8 2.9-8.2 10.1-4.7-3.5zM628.3 413.8l4.8 2.9-8.2 10-4.8-3.5zM655.6 416.8l4.8 2.9-8.1 9.9-4.8-3.5zM683 419.8l4.8 2.8-8.2 9.8-4.8-3.4zM710.3 422.7l4.8 2.8-8.1 9.7-4.8-3.4zM737.7 425.7l4.8 2.7-8.2 9.6-4.8-3.3zM765.1 428.6l4.8 2.7-8.2 9.5-4.8-3.3zM792.4 431.5l4.8 2.7-8.2 9.4-4.7-3.3zM819.8 434.4l4.8 2.7-8.2 9.2-4.8-3.2zM847.1 437.3l4.8 2.7-8.1 9.1-4.8-3.2z"/>
<path fill="#b30000" stroke="#b30000" d="M282.2 377.3l4.8 3.2-8.1 12.1-4.8-4.8zM332.1 381.7l4.8 3-8.1 11.3-4.8-4.3zM436.8 392.2l4.8 2.9-8.2 10.5-4.8-3.8zM464.1 395.4l4.8 2.9-8.1 10.5-4.8-3.8zM650.8 414.1l4.8 2.7-8.1 9.3-4.8-3.3zM678.2 417.1l4.8 2.7-8.2 9.2-4.8-3.3zM705.5 420l4.8 2.7-8.1 9.1-4.8-3.2zM732.9 423l4.8 2.7-8.2 9-4.8-3.2zM760.3 425.9l4.8 2.7-8.2 8.9-4.8-3.1z"/>
<path fill="#af0000" stroke="#af0000" d="M382.1 385.6l4.8 2.9-8.2 10.4-4.8-3.9zM409.4 388.9l4.8 2.9-8.2 10.5-4.8-3.9zM486.7 395.8l4.8 2.7-8.2 9.7-4.8-3.5zM514 398.9l4.8 2.8-8.1 9.6-4.8-3.5zM541.4 402l4.8 2.7-8.2 9.6-4.8-3.4zM568.8 405l4.8 2.8-8.2 9.5-4.8-3.4zM596.1 408.1l4.8 2.7-8.1 9.5-4.8-3.4zM623.5 411.1l4.8 2.7-8.2 9.4-4.8-3.3zM787.6 428.8l4.8 2.7-8.1 8.8-4.8-3.1zM815 431.7l4.8 2.7-8.2 8.7-4.8-3.1zM842.3 434.6l4.8 2.7-8.1 8.6-4.8-3z"/>
<path fill="#ab0000" stroke="#ab0000" d="M209.7 371l4.8 3.2-8.1 13.5-4.8-6.2zM232.3 372.4l4.8 3.1-8.2 12.5-4.8-5.4zM304.8 378.1l4.8 3-8.2 10.9-4.8-4.2zM354.7 382.3l4.8 2.8-8.2 10.3-4.8-3.9zM432 389.4l4.8 2.8-8.2 9.6-4.8-3.6zM459.3 392.6l4.8 2.8-8.1 9.6-4.8-3.5zM591.3 405.5l4.8 2.6-8.1 8.8-4.8-3.2zM618.7 408.5l4.8 2.6-8.2 8.8-4.8-3.2zM646 411.5l4.8 2.6-8.1 8.7-4.8-3.1zM673.4 414.5l4.8 2.6-8.2 8.6-4.8-3.1zM700.7 417.4l4.8 2.6-8.1 8.6-4.8-3.1zM728.1 420.4l4.8 2.6-8.2 8.5-4.8-3zM755.5 423.3l4.8 2.6-8.2 8.5-4.8-3.1zM782.8 426.3l4.8 2.5-8.1 8.4-4.8-3zM810.2 429.2l4.8 2.5-8.2 8.3-4.8-2.9zM837.5 432.1l4.8 2.5-8.1 8.3-4.8-3z"/>
<path fill="#a70000" stroke="#a70000" d="M254.9 373.5l4.8 3-8.2 11.5-4.8-4.8zM327.3 378.9l4.8 2.8-8.1 10-4.8-3.9zM404.6 386.2l4.8 2.7-8.2 9.5-4.7-3.5zM481.9 393.2l4.8 2.6-8.2 8.9-4.8-3.3zM509.2 396.3l4.8 2.6-8.1 8.9-4.8-3.3zM536.6 399.4l4.8 2.6-8.2 8.9-4.8-3.3zM564 402.4l4.8 2.6-8.2 8.9-4.8-3.2zM750.7 420.8l4.8 2.5-8.2 8-4.8-2.9zM778 423.8l4.8 2.5-8.1 7.9-4.8-2.9zM805.4 426.7l4.8 2.5-8.2 7.9-4.8-2.9z"/>
<path fill="#a30000" stroke="#a30000" d="M187.2 369l4.8 3.4-8.2 13.7-4.8-7.4zM277.4 374.5l4.8 2.8-8.1 10.5-4.8-4.2zM349.9 379.6l4.8 2.7-8.2 9.2-4.8-3.6zM377.3 383l4.8 2.6-8.2 9.4-4.8-3.5zM427.2 386.9l4.8 2.5-8.2 8.8-4.8-3.3zM454.5 390l4.8 2.6-8.1 8.9-4.8-3.3zM531.8 396.8l4.8 2.6-8.2 8.2-4.8-3zM559.2 399.9l4.8 2.5-8.2 8.3-4.8-3.1zM586.5 402.9l4.8 2.6-8.1 8.2-4.8-3zM613.9 406l4.8 2.5-8.2 8.2-4.8-3zM641.2 409l4.8 2.5-8.1 8.2-4.8-3zM668.6 412l4.8 2.5-8.2 8.1-4.8-2.9zM696 414.9l4.7 2.5-8.1 8.1-4.8-2.9zM723.3 417.9l4.8 2.5-8.2 8.1-4.8-3zM832.7 429.6l4.8 2.5-8.1 7.8-4.8-2.8z"/>
<path fill="#9f0000" stroke="#9f0000" d="M169.4 369.2l4.8 4-8.1 19.1-4.8-13.3zM300 375.4l4.8 2.7-8.2 9.7-4.8-3.9zM322.5 376.3l4.8 2.6-8.1 8.9-4.8-3.5zM399.8 383.7l4.8 2.5-8.1 8.7-4.8-3.3zM449.7 387.5l4.8 2.5-8.1 8.2-4.8-3.1zM477.1 390.7l4.8 2.5-8.2 8.2-4.8-3.1zM504.4 393.8l4.8 2.5-8.1 8.2-4.8-3.1zM581.7 400.5l4.8 2.4-8.1 7.8-4.8-2.9zM609.1 403.5l4.8 2.5-8.2 7.7-4.8-2.9zM636.4 406.5l4.8 2.5-8.1 7.7-4.8-2.9zM663.8 409.5l4.8 2.5-8.2 7.7-4.8-2.9zM691.2 412.5l4.8 2.4-8.2 7.7-4.8-2.8zM718.5 415.5l4.8 2.4-8.2 7.6-4.8-2.8zM745.9 418.4l4.8 2.4-8.2 7.6-4.8-2.7zM773.2 421.4l4.8 2.4-8.1 7.5-4.8-2.7zM800.6 424.3l4.8 2.4-8.2 7.5-4.8-2.7zM827.9 427.2l4.8 2.4-8.1 7.5-4.8-2.7zM855.3 430.2l4.8 2.4-8.2 7.4-4.8-2.7z"/>
<path fill="#9b0000" stroke="#9b0000" d="M205 368.1l4.7 2.9-8.1 10.5-4.8-5.1zM227.5 369.6l4.8 2.8-8.2 10.2-4.8-4.5zM250.1 370.8l4.8 2.7-8.2 9.7-4.8-4.1zM272.6 371.9l4.8 2.6-8.1 9.1-4.8-3.8zM345.1 377.2l4.8 2.4-8.2 8.3-4.8-3.2zM372.5 380.4l4.8 2.6-8.2 8.5-4.8-3.3zM422.4 384.4l4.8 2.5-8.2 8-4.8-3.1zM499.7 391.4l4.7 2.4-8.1 7.6-4.8-2.9zM527 394.4l4.8 2.4-8.2 7.8-4.8-2.9zM554.4 397.5l4.8 2.4-8.2 7.7-4.8-2.9zM604.3 401.2l4.8 2.3-8.2 7.3-4.8-2.7zM631.6 404.2l4.8 2.3-8.1 7.3-4.8-2.7zM659 407.2l4.8 2.3-8.2 7.3-4.8-2.7zM686.4 410.2l4.8 2.3-8.2 7.3-4.8-2.7zM713.7 413.1l4.8 2.4-8.2 7.2-4.8-2.7zM741.1 416.1l4.8 2.3-8.2 7.3-4.8-2.7zM768.4 419l4.8 2.4-8.1 7.2-4.8-2.7zM795.8 422l4.8 2.3-8.2 7.2-4.8-2.7zM823.1 424.9l4.8 2.3-8.1 7.2-4.8-2.7zM850.5 427.9l4.8 2.3-8.2 7.1-4.8-2.7z"/>
<path fill="#970000" stroke="#970000" d="M295.2 372.9l4.8 2.5-8.2 8.5-4.8-3.4zM317.7 373.9l4.8 2.4-8.1 8-4.8-3.2zM367.7 378l4.8 2.4-8.2 7.8-4.8-3.1zM395 381.2l4.8 2.5-8.1 7.9-4.8-3.1zM417.6 382.1l4.8 2.3-8.2 7.4-4.8-2.9zM444.9 385.2l4.8 2.3-8.1 7.6-4.8-2.9zM472.3 388.3l4.8 2.4-8.2 7.6-4.8-2.9zM494.9 389.1l4.8 2.3-8.2 7.1-4.8-2.7zM522.2 392.1l4.8 2.3-8.2 7.3-4.8-2.8zM549.6 395.2l4.8 2.3-8.2 7.2-4.8-2.7zM576.9 398.2l4.8 2.3-8.1 7.3-4.8-2.8zM626.8 401.9l4.8 2.3-8.1 6.9-4.8-2.6zM654.2 404.9l4.8 2.3-8.2 6.9-4.8-2.6zM681.6 407.9l4.8 2.3-8.2 6.9-4.8-2.6zM708.9 410.9l4.8 2.2-8.2 6.9-4.8-2.6zM736.3 413.8l4.8 2.3-8.2 6.9-4.8-2.6zM763.6 416.8l4.8 2.2-8.1 6.9-4.8-2.6zM791 419.7l4.8 2.3-8.2 6.8-4.8-2.5zM818.3 422.7l4.8 2.2-8.1 6.8-4.8-2.5zM845.7 425.6l4.8 2.3-8.2 6.7-4.8-2.5z"/>
<path fill="#930000" stroke="#930000" d="M222.7 367.1l4.8 2.5-8.2 8.5-4.8-3.9zM245.3 368.4l4.8 2.4-8.2 8.3-4.8-3.6zM267.8 369.5l4.8 2.4-8.1 7.9-4.8-3.3zM290.4 370.6l4.8 2.3-8.2 7.6-4.8-3.2zM340.3 374.8l4.8 2.4-8.2 7.5-4.8-3zM390.2 378.9l4.8 2.3-8.1 7.3-4.8-2.9zM440.1 382.9l4.8 2.3-8.1 7-4.8-2.8zM467.5 386l4.8 2.3-8.2 7.1-4.8-2.8zM490.1 386.8l4.8 2.3-8.2 6.7-4.8-2.6zM517.4 389.9l4.8 2.2-8.2 6.8-4.8-2.6zM544.8 392.9l4.8 2.3-8.2 6.8-4.8-2.6zM572.1 395.9l4.8 2.3-8.1 6.8-4.8-2.6zM594.7 396.7l9.6 4.5-8.2 6.9-4.8-2.6-4.8-2.6zM622 399.7l4.8 2.2-8.1 6.6-4.8-2.5zM649.4 402.7l4.8 2.2-8.2 6.6-4.8-2.5zM676.8 405.7l4.8 2.2-8.2 6.6-4.8-2.5zM704.1 408.6l4.8 2.3-8.2 6.5-4.7-2.5zM731.5 411.6l4.8 2.2-8.2 6.6-4.8-2.5zM758.8 414.6l4.8 2.2-8.1 6.5-4.8-2.5zM781.4 415.3l9.6 4.4-8.2 6.6-9.6-4.9zM808.7 418.3l9.6 4.4-8.1 6.5-9.6-4.9zM836.1 421.2l9.6 4.4-8.2 6.5-9.6-4.9zM863.5 424.1l4.8 2.2-8.2 6.3-4.8-2.4z"/>
<path fill="#8f0000" stroke="#8f0000" d="M182.4 366.3l4.8 2.7-8.2 9.7-4.8-5.5zM200.2 365.7l4.8 2.4-8.2 8.3-4.8-4zM312.9 371.6l4.8 2.3-8.1 7.2-4.8-3zM335.5 372.6l4.8 2.2-8.2 6.9-4.8-2.8zM362.9 375.8l4.8 2.2-8.2 7.1-4.8-2.8zM385.4 376.7l4.8 2.2-8.1 6.7-4.8-2.6zM412.8 379.8l4.8 2.3-8.2 6.8-4.8-2.7zM435.3 380.7l4.8 2.2-8.1 6.5-4.8-2.5zM462.7 383.8l4.8 2.2-8.2 6.6-4.8-2.6zM485.3 384.7l4.8 2.1-8.2 6.4-4.8-2.5zM512.6 387.7l4.8 2.2-8.2 6.4-4.8-2.5zM540 390.7l4.8 2.2-8.2 6.5-4.8-2.6zM562.5 391.6l9.6 4.3-8.1 6.5-4.8-2.5-4.8-2.4zM589.9 394.6l4.8 2.1-8.2 6.2-4.8-2.4zM617.2 397.6l4.8 2.1-8.1 6.3-4.8-2.5zM644.6 400.5l4.8 2.2-8.2 6.3-4.8-2.5zM672 403.5l4.8 2.2-8.2 6.3-4.8-2.5zM694.5 404.4l9.6 4.2-8.1 6.3-9.6-4.7zM721.9 407.3l9.6 4.3-8.2 6.3-9.6-4.8zM749.2 410.3l9.6 4.3-8.1 6.2-9.6-4.7zM776.6 413.2l4.8 2.1-8.2 6.1-4.8-2.4zM803.9 416.1l4.8 2.2-8.1 6-4.8-2.3zM831.3 419.1l4.8 2.1-8.2 6-4.8-2.3zM858.7 422l4.8 2.1-8.2 6.1-4.8-2.3z"/>
<path fill="#8b0000" stroke="#8b0000" d="M217.9 364.8l4.8 2.3-8.2 7.1-4.8-3.2zM240.5 366.1l4.8 2.3-8.2 7.1-4.8-3.1zM263 367.2l4.8 2.3-8.1 7-4.8-3zM285.6 368.3l4.8 2.3-8.2 6.7-4.8-2.8zM308.2 369.4l4.7 2.2-8.1 6.5-4.8-2.7zM330.7 370.4l4.8 2.2-8.2 6.3-4.8-2.6zM353.3 371.5l9.6 4.3-8.2 6.5-4.8-2.7-4.8-2.4zM380.6 374.5l4.8 2.2-8.1 6.3-4.8-2.6zM403.2 375.5l9.6 4.3-8.2 6.4-4.8-2.5-4.8-2.5zM430.5 378.6l4.8 2.1-8.1 6.2-4.8-2.5zM453.1 379.5l9.6 4.3-8.2 6.2-4.8-2.5-4.8-2.3zM480.5 382.6l4.8 2.1-8.2 6-4.8-2.4zM507.8 385.6l4.8 2.1-8.2 6.1-4.7-2.4zM530.4 386.5l9.6 4.2-8.2 6.1-4.8-2.4-4.8-2.3zM557.7 389.5l4.8 2.1-8.1 5.9-4.8-2.3zM585.1 392.5l4.8 2.1-8.2 5.9-4.8-2.3zM607.7 393.4l9.5 4.2-8.1 5.9-9.6-4.6zM635 396.4l9.6 4.1-8.2 6-9.6-4.6zM662.4 399.3l9.6 4.2-8.2 6-9.6-4.6zM689.7 402.3l4.8 2.1-8.1 5.8-4.8-2.3zM712.3 403.2l9.6 4.1-8.2 5.8-9.6-4.5zM739.6 406.1l9.6 4.2-8.1 5.8-9.6-4.5zM767 409.1l9.6 4.1-8.2 5.8-9.6-4.4zM794.4 412l9.5 4.1-8.1 5.9-9.6-4.5zM821.7 415l9.6 4.1-8.2 5.8-9.6-4.5zM849.1 417.9l9.6 4.1-8.2 5.9-9.6-4.5z"/>
<path fill="#870000" stroke="#870000" d="M195.4 363.4l4.8 2.3-8.2 6.7-4.8-3.4zM213.1 362.7l4.8 2.1-8.2 6.2-4.7-2.9zM235.7 363.9l4.8 2.2-8.2 6.3-4.8-2.8zM258.2 365.1l4.8 2.1-8.1 6.3-4.8-2.7zM280.8 366.2l4.8 2.1-8.2 6.2-4.8-2.6zM303.4 367.3l4.8 2.1-8.2 6-4.8-2.5zM325.9 368.4l4.8 2-8.2 5.9-4.8-2.4zM348.5 369.4l4.8 2.1-8.2 5.7-4.8-2.4zM371 370.5l9.6 4-8.1 5.9-4.8-2.4-4.8-2.2zM398.4 373.5l4.8 2-8.2 5.7-4.8-2.3zM420.9 374.5l9.6 4.1-8.1 5.8-4.8-2.3-4.8-2.3zM448.3 377.5l4.8 2-8.2 5.7-4.8-2.3zM470.9 378.5l9.6 4.1-8.2 5.7-9.6-4.5zM498.2 381.5l9.6 4.1-8.1 5.8-9.6-4.6zM520.8 382.5l9.6 4-8.2 5.6-9.6-4.4zM548.1 385.5l9.6 4-8.1 5.7-9.6-4.5zM570.7 386.4l14.4 6.1-8.2 5.7-9.6-4.5-4.8-2.1zM598.1 389.4l9.6 4-8.2 5.5-9.6-4.3zM625.4 392.3l9.6 4.1-8.2 5.5-9.6-4.3zM652.8 395.3l9.6 4-8.2 5.6-9.6-4.4zM675.3 396.3l14.4 6-8.1 5.6-9.6-4.4-4.8-2.1zM702.7 399.2l9.6 4-8.2 5.4-9.6-4.2zM730 402.1l9.6 4-8.1 5.5-9.6-4.3zM757.4 405.1l9.6 4-8.2 5.5-9.6-4.3zM780 406l14.4 6-8.2 5.5-14.4-6.4zM807.3 409l14.4 6-8.2 5.4-14.3-6.3zM834.7 411.9l14.4 6-8.2 5.5-14.4-6.4zM862 414.8l14.4 6-8.1 5.5-14.4-6.4z"/>
<path fill="#830000" stroke="#830000" d="M177.6 364l4.8 2.3-8.2 6.9-4.8-4zM190.6 361.4l4.8 2-8.2 5.6-4.8-2.7zM208.3 360.7l4.8 2-8.1 5.4-4.8-2.4zM226.1 359.9l9.6 4-8.2 5.7-4.8-2.5-4.8-2.3zM248.6 361.1l9.6 4-8.1 5.7-4.8-2.4-4.8-2.3zM271.2 362.2l9.6 4-8.2 5.7-4.8-2.4-4.8-2.3zM293.8 363.3l9.6 4-8.2 5.6-4.8-2.3-4.8-2.3zM311.5 362.5l9.6 3.9 4.8 2-8.2 5.5-4.8-2.3-9.5-4.3zM338.9 365.5l9.6 3.9-8.2 5.4-4.8-2.2-4.8-2.2zM361.4 366.5l9.6 4-8.1 5.3-9.6-4.3zM384 367.6l14.4 5.9-8.2 5.4-9.6-4.4-4.8-2zM406.6 368.7l14.3 5.8-8.1 5.3-9.6-4.3-4.8-2zM433.9 371.6l14.4 5.9-8.2 5.4-9.6-4.3-4.8-2.1zM456.5 372.7l14.4 5.8-8.2 5.3-9.6-4.3-4.8-2zM479 373.7l14.4 5.8 4.8 2-8.1 5.3-9.6-4.2-9.6-4.1zM506.4 376.7l14.4 5.8-8.2 5.2-9.6-4.2-4.8-2zM528.9 377.7l14.4 5.8 4.8 2-8.1 5.2-9.6-4.2-9.6-4zM556.3 380.6l14.4 5.8-8.2 5.2-14.4-6.1zM583.7 383.6l14.4 5.8-8.2 5.2-14.4-6.2zM606.2 384.6l19.2 7.7-8.2 5.3-14.3-6.2-4.8-2zM633.6 387.5l19.2 7.8-8.2 5.2-14.4-6.2-4.8-2zM656.1 388.6l19.2 7.7-8.1 5.1-14.4-6.1-4.8-2zM683.5 391.5l19.2 7.7-8.2 5.2-14.4-6.2-4.8-1.9zM710.9 394.4l19.1 7.7-8.1 5.2-14.4-6.1-4.8-2zM733.4 395.5l19.2 7.6 4.8 2-8.2 5.2-14.4-6.2-9.6-3.9zM760.8 398.4l19.2 7.6-8.2 5.1-14.4-6-4.8-2zM788.1 401.3l19.2 7.7-8.1 5.1-14.4-6.1-4.8-2zM815.5 404.2l19.2 7.7-8.2 5.1-14.4-6.1-4.8-1.9zM838 405.2l19.2 7.7 4.8 1.9-8.1 5.1-14.4-6-9.6-4zM865.4 408.1l19.2 7.7-8.2 5-14.4-6-4.8-1.9z"/>
<path fill="#800000" stroke="#800000" d="M185.8 359.4l4.8 2-8.2 4.9-4.8-2.3zM193.9 355l9.6 3.7 4.8 2-8.1 5-4.8-2.3-4.8-2-4.8-2zM202.1 350.6l19.2 7.4 4.8 1.9-8.2 4.9-4.8-2.1-9.6-4-9.6-3.7zM210.3 346.3l28.7 11 9.6 3.8-8.1 5-4.8-2.2-9.6-4-14.4-5.6-9.6-3.7zM218.4 341.9l38.4 14.6 14.4 5.7-8.2 5-4.8-2.1-9.6-4-14.4-5.7-23.9-9.1zM226.6 337.6l48 18.2 14.4 5.6 4.8 1.9-8.2 5-9.6-4.1-14.4-5.8-24-9.2-19.2-7.3zM234.8 333.2l57.5 21.8 19.2 7.5-8.1 4.8-9.6-4-14.4-5.7-33.6-12.8-19.2-7.2zM242.9 328.8l72 27.3 19.2 7.5 4.8 1.9-8.2 4.9-9.6-4-14.4-5.8-24-9.3-47.9-18.1zM251.1 324.5l81.5 30.8 24 9.3 4.8 1.9-8.1 5-9.6-4.1-14.4-5.7-28.8-11.1-57.6-21.8zM259.2 320.1l96 36.3 24 9.3 4.8 1.9-8.2 4.9-14.4-6-19.2-7.5-47.9-18.2-43.2-16.3zM267.4 315.8l110.4 41.7 24 9.3 4.8 1.9-8.2 4.8-14.4-5.9-19.2-7.5-52.8-20-52.8-20zM275.6 311.4l124.7 47.2 24 9.2 9.6 3.8-8.2 4.9-14.3-5.9-19.2-7.6-43.2-16.4-81.6-30.8zM283.7 307.1l139.2 52.6 28.8 11.1 4.8 1.9-8.2 4.8-14.4-5.9-19.2-7.5-43.2-16.4-95.9-36.3zM291.9 302.7l153.5 58.1 28.8 11 4.8 1.9-8.1 4.8-14.4-5.8-24-9.4-67.2-25.4-81.6-30.8zM300.1 298.4l167.9 63.4 28.8 11.1 9.6 3.8-8.2 4.8-14.4-5.9-24-9.3-52.7-20.1-115.2-43.5zM308.2 294l182.4 68.9 28.7 11.1 9.6 3.7-8.1 4.8-14.4-5.8-24-9.4-62.4-23.6-119.9-45.3zM316.4 289.6l201.5 76.2 28.8 11.1 9.6 3.7-8.2 4.9-14.4-5.9-23.9-9.4-52.8-20-148.8-56.2zM324.6 285.3l215.9 81.6 33.6 12.9 9.6 3.8-8.2 4.8-14.4-5.8-24-9.4-48-18.3-172.7-65.3zM332.7 280.9l230.3 87.1 33.6 12.9 9.6 3.7-8.1 4.8-19.2-7.7-28.8-11.1-91.2-34.6-134.3-50.7zM340.9 276.6l244.7 92.4 33.6 12.9 14.4 5.6-8.2 4.8-19.2-7.7-28.8-11.1-76.7-29.1-168-63.5zM349.1 272.2l263.9 99.7 33.5 12.9 9.6 3.8-8.1 4.7-19.2-7.6-28.8-11.2-86.4-32.7-172.7-65.2zM357.2 267.9l278.3 105.1 38.4 14.7 9.6 3.8-8.2 4.8-19.2-7.7-28.8-11.2-76.7-29.1-201.5-76.1zM365.4 263.5l297.5 112.4 33.6 12.9 14.4 5.6-8.2 4.8-19.2-7.7-28.8-11.2-72-27.3-225.5-85.1zM373.6 259.2l311.8 117.8 38.4 14.7 9.6 3.8-8.2 4.7-19.1-7.7-28.8-11.1-81.6-30.9-230.3-87zM381.7 254.8l326.3 123.3 38.4 14.7 14.4 5.6-8.2 4.7-19.2-7.6-28.8-11.2-71.9-27.3-259.1-97.8zM389.9 250.4l345.4 130.6 38.4 14.7 14.4 5.6-8.1 4.7-19.2-7.6-28.8-11.2-67.2-25.5-283.1-106.9zM398.1 246.1l359.8 135.9 38.4 14.7 19.2 7.5-8.2 4.8-19.2-7.7-28.8-11.2-67.1-25.5-302.3-114.2zM406.2 241.7l379.1 143.2 38.3 14.7 14.4 5.6-8.1 4.7-24-9.5-38.4-14.7-172.7-65.3-196.7-74.3zM414.4 237.4l393.4 148.6 43.2 16.5 14.4 5.6-8.2 4.8-24-9.5-33.5-13-105.6-39.9-287.9-108.8zM422.6 233l412.6 155.9 43.2 16.5 14.4 5.7-8.2 4.7-24-9.5-33.6-13-100.7-38.1-311.9-117.8zM430.7 228.7l431.8 163.1 38.4 14.7-8.1 4.6-33.6-13-76.8-29.2-359.8-135.9zM438.9 224.3l446.2 168.6 24 9.1-8.2 4.5-48-18.3-422.2-159.5zM447 220l465.5 175.8 4.8 1.8-8.2 4.4-81.6-30.9-388.6-146.8zM455.2 215.6l470.2 177.6-8.1 4.4-254.3-96.1-216-81.5zM463.4 211.3l470.2 177.6-8.2 4.3-470.2-177.6zM471.5 206.9l470.2 177.6-8.1 4.4-470.2-177.6zM479.7 202.5l470.2 177.6-8.2 4.4-470.2-177.6zM487.9 198.2l470.2 177.6-8.2 4.3-470.2-177.6zM496 193.8l470.2 177.6-8.1 4.4-470.2-177.6zM504.2 189.5l470.2 177.6-8.2 4.3-470.2-177.6zM512.4 185.1l470.2 177.6-8.2 4.4-470.2-177.6zM520.5 180.8l470.2 177.6-8.1 4.3-470.2-177.6zM528.7 176.4l470.2 177.6-8.2 4.4-470.2-177.6zM536.9 172.1l470.2 177.5-8.2 4.4-470.2-177.6zM545 167.7l470.2 177.6-8.1 4.3-470.2-177.5zM553.2 163.3l470.2 177.6-8.2 4.4-470.2-177.6z"/>
<path fill="none" stroke="#000" stroke-width="1.0" stroke-linejoin="round" d="M153.1 571.6l8.2-192.6 8.1-9.8 8.2-5.2 8.2-4.6 49-26.2 318.4-169.9M157.9 573.4l8.2-181.1 8.1-19.1 8.2-6.9 8.2-4.9 8.1-4.6 81.7-43.6 277.6-148M162.7 575.2l8.2-164 8.1-32.5 8.2-9.7 8.2-5.6 8.1-4.7 16.4-8.8 342.9-182.9M167.5 577l8.2-141.8 8.1-49.1 8.2-13.7 8.2-6.7 8.1-5 8.2-4.6 40.8-21.8 310.3-165.5M172.3 578.9l8.2-116.4 8.1-66.7 8.2-19.4 8.2-8.3 8.1-5.4 8.2-4.7 16.3-8.8 334.8-178.6M177.1 580.7l8.2-90.2 8.1-82.5 8.2-26.5 8.1-10.5 8.2-6.2 8.2-4.9 8.1-4.5 49-26.2 294-156.8M181.9 582.5l8.2-65.7 8.1-94.1 8.2-35 8.1-13.5 8.2-7.1 8.2-5.2 8.1-4.6 16.4-8.9 326.6-174.2M186.7 584.3l8.1-45.2 8.2-99.5 8.2-44.2 8.1-17.3 8.2-8.5 8.2-5.7 8.1-4.7 8.2-4.5 65.3-34.9 269.5-143.8M191.5 586.1l8.1-29.6 8.2-98.4 8.2-53.5 8.1-22 8.2-10.2 8.2-6.3 8.1-5 8.2-4.6 32.7-17.5 302.1-161.2M196.3 587.9l8.1-18.8 8.2-91.5 8.2-62.1 8.1-27.5 8.2-12.5 8.2-7.1 8.1-5.3 8.2-4.7 16.3-8.9 318.5-169.8M201.1 589.7l8.1-11.9 8.2-80.7 8.2-69.2 8.1-33.5 8.2-15.3 8.2-8.3 8.1-5.7 8.2-4.8 8.2-4.5 40.8-21.9 285.8-152.4M205.9 591.5l8.1-8 8.2-67.7 8.2-74.1 8.1-39.8 8.2-18.7 8.2-9.7 8.1-6.3 8.2-5 8.2-4.6 24.5-13.2 302.1-161.1M210.7 593.4l8.1-6 8.2-54.4 8.2-76.3 8.1-46.2 8.2-22.5 8.2-11.5 8.1-7 8.2-5.3 8.2-4.7 16.3-8.9 310.3-165.5M215.5 595.2l8.1-5.1 8.2-42.1 8.2-75.6 8.1-52.1 8.2-26.9 8.2-13.6 8.1-7.9 8.2-5.7 8.2-4.8 8.1-4.5 32.7-17.6 285.8-152.4M220.3 597l8.1-4.6 8.2-31.7 8.2-72.2 8.1-57.2 8.2-31.6 8.2-16.1 8.1-9.1 8.2-6.2 8.2-5 8.1-4.6 16.4-8.8 302.1-161.2M225.1 598.8l8.1-4.4 8.2-23.3 8.2-66.7 8.1-61.1 8.2-36.4 8.2-19.1 8.1-10.5 8.2-6.7 8.2-5.3 8.1-4.7 16.4-8.9 302.1-161.2M229.9 600.6l8.1-4.4 8.2-16.9 8.2-59.6 8.1-63.5 8.2-41.2 8.2-22.4 8.1-12.1 8.2-7.6 8.2-5.6 8.1-4.8 8.2-4.6 32.6-17.5 277.7-148.1M234.7 602.4l8.1-4.3 8.2-12.4 8.2-51.6 8.1-64.4 8.2-45.7 8.2-25.9 8.1-14.2 8.2-8.5 8.2-6 8.1-5 8.2-4.6 16.3-8.8 294-156.8M239.5 604.2l8.1-4.3 8.2-9.3 8.2-43.4 8.1-63.6 8.2-49.6 8.2-29.8 8.1-16.4 8.2-9.7 8.1-6.5 8.2-5.2 8.2-4.7 16.3-8.9 294-156.8M244.3 606l8.1-4.3 8.2-7.2 8.2-35.7 8.1-61.2 8.2-52.9 8.2-33.6 8.1-19.1 8.2-10.9 8.1-7.2 8.2-5.5 8.2-4.8 8.1-4.6 32.7-17.5 269.5-143.7M249.1 607.9l8.1-4.4 8.2-6 8.2-28.6 8.1-57.4 8.2-55.3 8.1-37.5 8.2-21.8 8.2-12.6 8.1-8 8.2-5.9 8.2-4.9 8.1-4.6 16.4-8.9 285.8-152.4M253.9 609.7l8.1-4.4 8.2-5.2 8.2-22.6 8.1-52.7 8.2-56.6 8.1-41.1 8.2-24.9 8.2-14.4 8.1-8.9 8.2-6.3 8.2-5.2 8.1-4.7 16.4-8.8 285.8-152.5M258.7 611.5l8.1-4.4 8.2-4.8 8.1-17.6 8.2-47.2 8.2-56.9 8.1-44.4 8.2-28 8.2-16.5 8.1-10 8.2-6.9 8.2-5.4 8.1-4.8 8.2-4.5 32.7-17.5 261.3-139.4M263.5 613.3l8.1-4.4 8.2-4.5 8.1-13.8 8.2-41.4 8.2-55.9 8.1-47.2 8.2-31.4 8.2-18.7 8.1-11.3 8.2-7.5 8.2-5.7 8.1-5 8.2-4.5 24.5-13.2 269.5-143.8M268.2 615.1l8.2-4.4 8.2-4.4 8.1-10.8 8.2-35.6 8.2-54 8.1-49.4 8.2-34.5 8.2-21.3 8.1-12.8 8.2-8.3 8.2-6 8.1-5.1 8.2-4.7 16.3-8.9 277.6-148.1M273 616.9l16.4-8.7 8.1-8.7 8.2-30.1 16.3-101.9 8.2-37.7 8.2-23.8 8.1-14.5 8.2-9.2 8.2-6.5 8.1-5.3 8.2-4.8 8.2-4.5 32.6-17.5 253.1-135M277.8 618.7l16.4-8.7 8.1-7.1 8.2-25 8.2-47.6 8.1-51.5 8.2-40.5 8.2-26.6 8.1-16.3 8.2-10.3 8.2-7.1 8.1-5.5 8.2-4.9 8.2-4.6 24.5-13.2 261.2-139.3M282.6 620.5l16.4-8.7 8.1-6.1 8.2-20.5 8.2-43.4 8.1-51.4 8.2-43 8.2-29.4 8.1-18.4 8.2-11.4 8.2-7.8 8.1-5.9 8.2-5 8.2-4.6 16.3-8.9 269.4-143.7M287.4 622.4l16.4-8.8 8.1-5.4 8.2-16.7 8.2-39 8.1-50.5 8.2-44.9 8.2-32.2 8.1-20.6 8.2-12.8 8.2-8.5 8.1-6.3 8.2-5.2 8.2-4.7 16.3-9 269.4-143.7M292.2 624.2l16.4-8.7 8.1-5 8.2-13.7 8.2-34.4 8.1-48.8 8.2-46.4 8.2-34.8 8.1-23 8.2-14.4 8.2-9.4 8.1-6.7 8.2-5.4 8.2-4.8 8.1-4.6 24.5-13.2 253.1-135M297 626l16.4-8.7 8.1-4.8 8.2-11.1 8.2-30 8.1-46.4 8.2-47.3 8.2-37.3 8.1-25.4 8.2-16.1 8.2-10.4 8.1-7.3 8.2-5.7 8.2-4.9 8.1-4.6 16.3-8.9 261.3-139.4M301.8 627.8l16.4-8.7 8.1-4.6 8.2-9.2 8.2-25.7 8.1-43.6 8.2-47.6 8.2-39.5 8.1-27.8 8.2-18 8.2-11.5 8.1-7.9 8.2-6.1 8.1-5.1 8.2-4.7 16.3-8.9 261.3-139.4M306.6 629.6l16.4-8.7 8.1-4.5 8.2-7.7 8.2-21.9 8.1-40.2 8.2-47.3 8.2-41.4 8.1-30.2 8.2-20 8.2-12.8 8.1-8.7 8.2-6.4 8.1-5.3 8.2-4.8 8.2-4.5 24.5-13.2 244.9-130.7M311.4 631.4l24.5-13.1 8.2-6.7 8.2-18.4 8.1-36.7 8.2-46.4 8.2-42.8 8.1-32.5 8.2-22.1 8.1-14.3 8.2-9.5 8.2-6.8 8.1-5.6 8.2-4.9 8.2-4.6 16.3-8.8 253.1-135.1M316.2 633.2l24.5-13.1 8.2-5.9 8.2-15.4 8.1-33 8.2-44.9 8.2-43.9 8.1-34.7 8.2-24.1 8.1-15.9 8.2-10.5 8.2-7.4 8.1-5.8 8.2-5 8.2-4.7 16.3-8.9 253.1-135M321 635l24.5-13 8.2-5.4 8.2-13 8.1-29.3 8.2-42.8 8.1-44.4 8.2-36.8 8.2-26.3 8.1-17.5 8.2-11.6 8.2-8 8.1-6.2 8.2-5.2 8.2-4.7 8.1-4.5 32.7-17.6 228.6-121.9M325.8 636.8l24.5-13 8.2-5 8.2-10.9 8.1-25.8 8.2-40.3 8.1-44.5 8.2-38.5 8.2-28.5 8.1-19.3 8.2-12.8 8.2-8.8 8.1-6.5 8.2-5.4 8.2-4.8 8.1-4.6 24.5-13.2 236.8-126.3M330.6 638.7l24.5-13.1 8.2-4.8 8.1-9.2 8.2-22.4 8.2-37.6 8.1-44 8.2-40 8.2-30.5 8.1-21.2 8.2-14.1 8.2-9.6 8.1-7 8.2-5.7 8.2-4.9 8.1-4.6 16.4-8.9 244.9-130.7M335.4 640.5l24.5-13.1 8.2-4.6 8.1-7.9 8.2-19.4 8.2-34.6 8.1-43.1 8.2-41 8.2-32.6 8.1-23.1 8.2-15.5 8.2-10.5 8.1-7.6 8.2-5.9 8.2-5.1 8.1-4.7 16.4-8.9 244.9-130.7M340.2 642.3l24.5-13.1 8.2-4.5 8.1-6.9 8.2-16.6 8.2-31.5 16.3-83.4 8.2-34.4 8.1-25.1 8.2-17.1 8.2-11.5 8.1-8.2 8.2-6.2 8.2-5.3 8.1-4.8 8.2-4.5 24.5-13.2 228.6-122M345 644.1l24.5-13.1 8.2-4.4 8.1-6.2 8.2-14.2 8.2-28.4 8.1-39.9 8.2-42 8.2-36 8.1-27.1 8.2-18.7 8.2-12.6 8.1-8.9 8.2-6.6 8.2-5.5 8.1-4.9 8.2-4.6 16.3-8.8 236.8-126.4M349.8 645.9l32.7-17.5 8.1-5.6 8.2-12.1 8.2-25.4 8.1-37.8 8.2-41.8 8.2-37.5 8.1-28.9 8.2-20.4 8.2-13.9 8.1-9.6 8.2-7.1 8.2-5.7 8.1-5 8.2-4.7 16.3-8.9 236.8-126.4M354.6 647.7l32.7-17.4 8.1-5.2 8.2-10.5 8.2-22.4 8.1-35.4 8.2-41.3 8.2-38.6 8.1-30.7 8.2-22.2 8.2-15.2 8.1-10.5 8.2-7.6 8.2-6 8.1-5.2 8.2-4.7 8.2-4.6 32.6-17.5 212.3-113.2M359.4 649.5l32.7-17.4 8.1-4.9 8.2-9 8.2-19.8 8.1-32.8 8.2-40.4 8.2-39.4 8.1-32.4 8.2-23.9 8.2-16.7 8.1-11.4 8.2-8.2 8.2-6.4 8.1-5.3 8.2-4.8 8.2-4.6 24.4-13.2 220.5-117.6M364.2 651.3l32.7-17.4 8.1-4.7 8.2-7.9 8.2-17.2 8.1-30.2 8.2-39.1 8.2-39.8 8.1-34 8.2-25.7 8.2-18.1 8.1-12.5 8.2-8.9 8.2-6.7 8.1-5.6 8.2-4.9 8.1-4.6 16.4-8.9 228.6-122M369 653.2l32.7-17.5 8.1-4.6 8.2-6.9 8.2-15 8.1-27.5 8.2-37.5 8.2-39.9 8.1-35.3 8.2-27.5 8.2-19.7 8.1-13.6 8.2-9.7 8.2-7.1 8.1-5.8 8.2-5.1 8.1-4.7 16.4-8.9 220.4-117.7 8.2-4.3M373.8 655l32.7-17.5 8.1-4.5 8.2-6.2 8.2-13.1 8.1-24.8 8.2-35.6 8.2-39.7 8.1-36.4 8.2-29.1 8.2-21.3 8.1-14.9 8.2-10.5 8.1-7.6 8.2-6.1 8.2-5.2 8.1-4.8 8.2-4.5 24.5-13.2 212.3-113.3M378.6 656.8l32.7-17.4 8.1-4.5 8.2-5.7 8.2-11.4 8.1-22.2 8.2-33.5 8.2-39.1 8.1-37.3 8.2-30.7 8.2-22.9 8.1-16.2 8.2-11.4 8.1-8.2 8.2-6.4 8.2-5.4 8.1-4.9 8.2-4.6 16.3-8.9 220.5-117.6M383.4 658.6l32.7-17.4 8.1-4.4 8.2-5.4 8.2-9.9 8.1-19.8 8.2-31.3 16.3-75.9 8.2-32.2 8.1-24.6 8.2-17.6 8.2-12.3 8.1-8.9 8.2-6.8 8.2-5.6 8.1-5 8.2-4.6 16.3-8.9 220.5-117.7M388.2 660.4l40.8-21.8 8.2-5 8.2-8.7 8.1-17.6 8.2-28.9 8.2-37 8.1-38.1 8.2-33.4 8.1-26.2 8.2-19 8.2-13.4 8.1-9.6 8.2-7.3 8.2-5.8 8.1-5.1 8.2-4.7 8.2-4.6 24.5-13.2 204.1-108.9M393 662.2l40.8-21.8 8.2-4.8 8.2-7.7 8.1-15.5 8.2-26.6 8.2-35.4 8.1-38.1 8.2-34.5 8.1-27.7 8.2-20.6 8.2-14.6 8.1-10.3 8.2-7.8 8.2-6.1 8.1-5.2 8.2-4.9 8.2-4.5 24.5-13.3 204.1-108.8M397.8 664l40.8-21.8 8.2-4.6 8.2-6.9 8.1-13.7 8.2-24.2 8.1-33.8 8.2-37.7 8.2-35.4 8.1-29.2 8.2-22 8.2-15.8 8.1-11.3 8.2-8.2 8.2-6.5 8.1-5.4 8.2-4.9 8.2-4.7 16.3-8.9 212.3-113.2M402.6 665.8l40.8-21.7 8.2-4.6 8.2-6.3 8.1-12 8.2-21.9 8.1-31.9 8.2-37.1 8.2-36.1 8.1-30.5 8.2-23.6 8.2-17 8.1-12.2 8.2-8.9 8.2-6.8 8.1-5.7 8.2-5 8.2-4.7 16.3-8.9 155.1-82.8 57.2-30.5M407.4 667.7l40.8-21.8 8.2-4.5 8.1-5.8 8.2-10.6 8.2-19.7 8.1-29.9 16.4-72.7 8.1-31.8 8.2-25 8.2-18.4 8.1-13.2 8.2-9.6 8.2-7.2 8.1-5.9 8.2-5.2 8.2-4.7 8.1-4.6 24.5-13.2 196-104.5M412.2 669.5l40.8-21.8 8.2-4.5 8.1-5.4 8.2-9.3 8.2-17.7 8.1-27.8 8.2-35.1 8.2-36.6 8.1-32.8 8.2-26.5 8.2-19.8 8.1-14.3 8.2-10.3 8.2-7.7 8.1-6.2 8.2-5.3 8.2-4.8 8.1-4.6 16.4-8.9 204.1-108.9M417 671.3l40.8-21.8 8.2-4.4 8.1-5.1 8.2-8.3 8.2-15.8 8.1-25.7 8.2-33.7 8.2-36.5 8.1-33.7 8.2-27.9 8.2-21.2 8.1-15.4 8.2-11.1 8.2-8.3 8.1-6.5 8.2-5.5 8.2-4.9 8.1-4.6 16.4-9 204.1-108.9M421.8 673.1l49-26.2 8.1-4.9 8.2-7.4 8.2-14.1 8.1-23.6 8.2-32.1 8.2-36.1 8.1-34.4 8.2-29.2 8.2-22.6 8.1-16.6 8.2-12 8.2-8.9 8.1-6.8 8.2-5.7 8.2-5.1 8.1-4.7 16.4-8.9 97.9-52.4 106.2-56.6M426.6 674.9l49-26.2 8.1-4.7 8.2-6.8 8.2-12.4 8.1-21.5 8.2-30.5 8.2-35.5 8.1-34.9 8.2-30.3 8.2-24 8.1-17.8 8.2-13 8.2-9.5 8.1-7.3 8.2-5.9 8.2-5.2 8.1-4.8 8.2-4.5 24.5-13.3 187.8-100.2M431.4 676.7l49-26.1 8.1-4.6 8.2-6.3 8.2-11 8.1-19.6 8.2-28.7 8.2-34.5 8.1-35.2 8.2-31.4 8.2-25.3 8.1-19.1 8.2-14 8.2-10.2 8.1-7.8 8.2-6.2 8.2-5.3 8.1-4.9 8.2-4.6 16.3-8.9 196-104.5M436.2 678.5l49-26.1 8.1-4.5 8.2-5.8 8.2-9.9 8.1-17.6 8.2-26.8 8.2-33.5 8.1-35.2 8.2-32.3 8.2-26.6 8.1-20.5 8.2-15 8.2-11 8.1-8.2 8.2-6.6 8.2-5.5 8.1-5 8.2-4.6 16.3-9 130.7-69.7 65.3-34.8M441 680.3l49-26.1 8.1-4.5 8.2-5.4 8.2-8.8 8.1-15.9 8.2-24.9 8.2-32.2 8.1-35 8.2-33 8.2-27.9 8.1-21.7 8.2-16.2 8.2-11.8 8.1-8.8 8.2-6.9 8.1-5.7 8.2-5.1 8.2-4.7 8.1-4.6 24.5-13.2 179.7-95.8M445.8 682.2l49-26.2 8.1-4.4 8.2-5.2 8.2-7.9 8.1-14.3 8.2-23 8.2-30.7 8.1-34.6 8.2-33.5 8.2-29 8.1-23.1 8.2-17.3 8.2-12.7 8.1-9.5 8.2-7.3 8.1-5.9 8.2-5.3 8.2-4.8 8.1-4.5 16.4-8.9 187.8-100.2M450.6 684l49-26.2 8.1-4.4 8.2-4.9 8.2-7.2 8.1-12.8 8.2-21.1 8.2-29.2 16.3-67.9 8.2-30 8.1-24.3 8.2-18.5 8.1-13.7 8.2-10.1 8.2-7.7 8.1-6.3 8.2-5.4 8.2-4.8 8.1-4.7 16.4-8.9 187.8-100.2M455.4 685.8l57.1-30.5 8.2-4.8 8.2-6.6 8.1-11.5 8.2-19.3 8.2-27.6 8.1-33 8.2-34.1 8.2-30.9 8.1-25.5 8.2-19.8 8.1-14.6 8.2-10.9 8.2-8.2 8.1-6.6 8.2-5.5 8.2-5 8.1-4.7 16.4-9 89.8-47.9 98-52.3M460.2 687.6l57.1-30.5 8.2-4.7 8.2-6.1 8.1-10.3 8.2-17.5 8.2-25.9 8.1-32 8.2-34 8.1-31.7 8.2-26.7 8.2-20.9 8.1-15.8 8.2-11.6 8.2-8.8 8.1-6.9 8.2-5.8 8.2-5.1 8.1-4.7 8.2-4.6 24.5-13.2 171.5-91.5M465 689.4l57.1-30.5 8.2-4.6 8.2-5.7 8.1-9.2 8.2-15.9 8.2-24.2 8.1-30.8 8.2-33.7 8.1-32.3 8.2-27.8 8.2-22.2 8.1-16.8 8.2-12.5 8.2-9.4 8.1-7.3 8.2-6 8.2-5.2 8.1-4.8 8.2-4.6 16.3-8.9 179.7-95.9M469.8 691.2l57.1-30.5 8.2-4.5 8.2-5.4 8.1-8.4 8.2-14.3 8.1-22.4 8.2-29.6 8.2-33.2 8.1-32.7 8.2-28.8 8.2-23.4 8.1-17.9 8.2-13.4 8.2-10 8.1-7.7 8.2-6.3 8.2-5.4 8.1-4.9 8.2-4.7 16.3-8.9 130.7-69.7 49-26.2M474.6 693l57.1-30.5 8.2-4.4 8.2-5.2 8.1-7.6 8.2-13 8.1-20.6 8.2-28.1 16.3-65.5 8.2-29.7 8.2-24.6 8.1-19.1 8.2-14.3 8.2-10.7 8.1-8.2 8.2-6.6 8.2-5.6 8.1-5 8.2-4.7 16.3-9 73.5-39.2 106.2-56.6M479.4 694.8l57.1-30.5 8.2-4.4 8.1-4.9 8.2-7 8.2-11.7 8.1-19 8.2-26.6 8.2-31.8 8.1-32.9 8.2-30.5 8.2-25.6 8.1-20.3 8.2-15.3 8.2-11.5 8.1-8.7 8.2-6.9 8.2-5.8 8.1-5.1 8.2-4.8 8.2-4.6 24.5-13.2 163.3-87.1M484.2 696.6l65.3-34.8 8.1-4.8 8.2-6.5 8.2-10.6 8.1-17.4 8.2-25 8.2-30.8 8.1-32.8 8.2-31.1 8.2-26.7 8.1-21.4 8.2-16.3 8.2-12.3 8.1-9.3 8.2-7.3 8.2-6 8.1-5.3 8.2-4.8 8.2-4.6 16.3-8.9 171.5-91.5M489 698.5l65.3-34.9 8.1-4.7 8.2-6 8.2-9.6 8.1-15.8 8.2-23.5 8.2-29.6 8.1-32.6 8.2-31.5 8.2-27.7 8.1-22.5 8.2-17.4 8.2-13.1 8.1-9.9 8.2-7.7 8.2-6.3 8.1-5.5 8.2-4.9 8.2-4.6 16.3-9 89.8-48 81.7-43.5M493.8 700.3l65.3-34.9 8.1-4.6 8.2-5.6 8.2-8.7 8.1-14.5 8.2-21.8 8.2-28.4 16.3-63.9 8.2-28.6 8.1-23.6 8.2-18.5 8.2-14 8.1-10.6 8.2-8.1 8.2-6.6 8.1-5.6 8.2-5 8.2-4.8 8.1-4.5 24.5-13.2 155.2-82.8M498.6 702.1l65.3-34.9 8.1-4.5 8.2-5.3 8.2-8 8.1-13.1 8.2-20.2 8.2-27.1 8.1-31.4 8.2-32 8.2-29.4 8.1-24.7 8.2-19.5 8.2-15 8.1-11.3 8.2-8.6 8.2-6.9 8.1-5.8 8.2-5.2 8.2-4.8 8.1-4.5 16.3-8.9 163.4-87.2M503.4 703.9l65.3-34.9 8.1-4.4 8.2-5.1 8.2-7.3 8.1-12 8.2-18.6 8.2-25.7 8.1-30.6 8.2-32 8.2-30 8.1-25.7 8.2-20.7 8.2-15.9 8.1-12 8.2-9.2 8.2-7.3 8.1-6 8.2-5.3 8.1-4.9 8.2-4.6 16.3-8.9 130.7-69.7 32.7-17.5M508.1 705.7l65.4-34.8 8.1-4.5 8.2-4.9 8.2-6.8 8.1-10.8 8.2-17.2 8.2-24.2 8.1-29.7 8.2-31.8 8.2-30.4 8.1-26.7 8.2-21.7 8.2-17 8.1-12.8 8.2-9.8 8.2-7.7 8.1-6.3 8.2-5.4 8.1-5 8.2-4.6 16.3-9 73.5-39.2 89.8-48M512.9 707.5l65.4-34.8 8.1-4.4 8.2-4.8 8.2-6.3 8.1-9.9 8.2-15.7 8.2-22.8 8.1-28.6 8.2-31.4 8.2-30.9 8.1-27.5 8.2-22.8 8.2-17.9 8.1-13.7 8.2-10.5 8.1-8.1 8.2-6.5 8.2-5.7 8.1-5 8.2-4.7 8.2-4.6 24.5-13.2 146.9-78.4M517.7 709.3l73.5-39.2 8.2-4.7 8.2-5.9 8.1-9 8.2-14.4 8.2-21.3 8.1-27.4 16.4-62 8.1-28.3 8.2-23.8 8.2-19 8.1-14.6 8.2-11.1 8.1-8.6 8.2-6.9 8.2-5.8 8.1-5.2 8.2-4.8 8.2-4.5 16.3-8.9 155.1-82.8M522.5 711.1l73.5-39.2 8.2-4.6 8.2-5.5 8.1-8.3 8.2-13.2 8.2-19.8 8.1-26.1 8.2-30.4 8.2-31.1 8.1-28.9 8.2-24.8 8.1-20 8.2-15.5 8.2-11.9 8.1-9.1 8.2-7.2 8.2-6.1 8.1-5.3 8.2-4.8 8.2-4.7 16.3-8.9 98-52.3 57.1-30.5M527.3 713l73.5-39.3 8.2-4.5 8.2-5.3 8.1-7.6 8.2-12 8.2-18.4 8.1-24.8 8.2-29.6 8.2-31 8.1-29.5 8.2-25.7 8.1-21 8.2-16.5 8.2-12.6 8.1-9.7 8.2-7.6 8.2-6.3 8.1-5.5 8.2-4.9 8.2-4.7 16.3-9 65.3-34.9 89.8-47.9M532.1 714.8l73.5-39.2 8.2-4.5 8.2-5.1 8.1-7 8.2-11 8.2-17 8.1-23.5 8.2-28.6 8.1-30.9 8.2-29.9 8.2-26.5 8.1-22 8.2-17.5 8.2-13.4 8.1-10.2 8.2-8.1 8.2-6.6 8.1-5.6 8.2-5.1 8.2-4.7 8.1-4.6 24.5-13.2 138.8-74.1M536.9 716.6l73.5-39.2 8.2-4.5 8.2-4.9 8.1-6.5 8.2-10.1 8.2-15.6 8.1-22.2 8.2-27.6 16.3-60.6 8.2-27.3 8.1-23 8.2-18.4 8.2-14.3 8.1-10.9 8.2-8.5 8.2-6.9 8.1-5.8 8.2-5.2 8.2-4.8 8.1-4.6 16.4-8.9 146.9-78.5M541.7 718.4l73.5-39.2 8.2-4.4 8.2-4.8 8.1-6.1 8.2-9.2 8.1-14.4 8.2-20.8 8.2-26.5 8.1-30 8.2-30.3 8.2-28 8.1-23.9 8.2-19.4 8.2-15.1 8.1-11.6 8.2-9 8.2-7.3 8.1-6 8.2-5.3 8.2-4.9 8.1-4.7 16.4-8.9 81.6-43.6 65.3-34.9M546.5 720.2l81.7-43.6 8.2-4.7 8.1-5.7 8.2-8.5 8.1-13.2 8.2-19.4 8.2-25.4 8.1-29.3 8.2-30.3 8.2-28.5 8.1-24.9 8.2-20.3 8.2-16 8.1-12.4 8.2-9.6 8.2-7.6 8.1-6.2 8.2-5.5 8.2-5 8.1-4.7 16.4-9 57.1-30.6 89.8-47.9M551.3 722l81.7-43.6 8.1-4.6 8.2-5.4 8.2-7.8 8.1-12.2 8.2-18 8.2-24.1 8.1-28.6 8.2-30.2 8.2-29 8.1-25.6 8.2-21.4 8.2-16.9 8.1-13.1 8.2-10.2 8.2-8 8.1-6.5 8.2-5.7 8.2-5.1 8.1-4.7 8.2-4.6 16.3-8.9 138.8-74M556.1 723.8l81.7-43.5 8.1-4.6 8.2-5.2 8.2-7.3 8.1-11.1 8.2-16.7 8.2-22.9 8.1-27.7 8.2-29.9 8.2-29.3 8.1-26.4 8.2-22.3 8.2-17.9 8.1-13.9 8.2-10.7 8.2-8.5 8.1-6.9 8.2-5.8 8.2-5.2 8.1-4.8 8.2-4.6 16.3-8.9 106.2-56.7 32.6-17.4M560.9 725.6l81.7-43.5 8.1-4.5 8.2-5.1 8.2-6.7 8.1-10.2 8.2-15.5 8.2-21.6 8.1-26.7 16.4-59.1 8.1-27.1 8.2-23.1 8.2-18.8 8.1-14.8 8.2-11.4 8.2-8.9 8.1-7.2 8.2-6.1 8.2-5.3 8.1-4.9 8.2-4.7 16.3-8.9 65.3-34.9 73.5-39.2M565.7 727.5l81.7-43.6 8.1-4.5 8.2-4.9 8.2-6.3 8.1-9.4 8.2-14.3 8.2-20.2 8.1-25.7 8.2-29.1 8.2-29.6 8.1-27.6 8.2-24.1 8.2-19.7 8.1-15.6 8.2-12.1 8.2-9.5 8.1-7.5 8.2-6.3 8.2-5.5 8.1-5 8.2-4.7 16.3-9 49-26.2 89.8-47.9M570.5 729.3l81.7-43.6 8.1-4.4 8.2-4.8 8.2-5.9 8.1-8.7 8.2-13.2 8.2-19 8.1-24.6 8.2-28.4 8.2-29.5 8.1-28.2 8.2-24.8 8.2-20.7 8.1-16.4 8.2-12.9 8.2-10 8.1-7.9 8.2-6.6 8.2-5.6 8.1-5.1 8.2-4.8 8.1-4.6 16.4-8.9 130.6-69.7M575.3 731.1l81.7-43.6 8.1-4.4 8.2-4.7 8.2-5.6 8.1-8 8.2-12.2 8.2-17.7 8.1-23.4 8.2-27.7 8.2-29.4 8.1-28.5 8.2-25.6 8.2-21.5 8.1-17.4 8.2-13.6 8.2-10.6 8.1-8.4 8.2-6.8 8.1-5.9 8.2-5.2 8.2-4.8 8.1-4.6 16.4-8.9 89.8-48 40.8-21.8M580.1 732.9l89.8-48 8.2-4.6 8.2-5.3 8.1-7.5 8.2-11.2 8.2-16.5 8.1-22.2 8.2-26.8 8.2-29.2 8.1-28.7 8.2-26.3 8.2-22.4 8.1-18.2 8.2-14.4 8.2-11.3 8.1-8.8 8.2-7.2 8.1-6 8.2-5.4 8.2-4.9 8.1-4.6 16.4-9 65.3-34.9 65.3-34.9M584.9 734.7l89.8-47.9 8.2-4.6 8.2-5.2 8.1-6.9 8.2-10.3 8.2-15.3 8.1-21.1 8.2-25.9 16.3-57.6 8.2-26.8 8.2-23.3 8.1-19.1 8.2-15.2 8.1-11.9 8.2-9.4 8.2-7.5 8.1-6.3 8.2-5.4 8.2-5.1 8.1-4.7 8.2-4.5 24.5-13.3 114.3-61M589.7 736.5l89.8-47.9 8.2-4.5 8.2-5 8.1-6.5 8.2-9.5 8.2-14.2 8.1-19.9 8.2-24.9 8.2-28.2 8.1-28.9 8.2-27.3 8.2-24.1 8.1-20 8.2-16.1 8.1-12.5 8.2-9.9 8.2-7.9 8.1-6.5 8.2-5.7 8.2-5.1 8.1-4.8 8.2-4.6 16.3-8.9 122.5-65.3M594.5 738.3l89.8-47.9 8.2-4.5 8.2-4.8 8.1-6.1 8.2-8.8 8.2-13.2 8.1-18.6 8.2-23.9 8.2-27.6 8.1-28.8 8.2-27.7 8.1-24.8 8.2-20.9 8.2-16.9 8.1-13.3 8.2-10.5 8.2-8.3 8.1-6.8 8.2-5.8 8.2-5.2 8.1-4.9 8.2-4.6 16.3-8.9 73.5-39.3 49-26.1M599.3 740.1l89.8-47.9 8.2-4.4 8.2-4.8 8.1-5.8 8.2-8.1 8.2-12.2 8.1-17.4 8.2-22.8 8.2-26.8 8.1-28.7 8.2-28 8.1-25.5 8.2-21.7 8.2-17.8 8.1-14 8.2-11.1 8.2-8.7 8.1-7.2 8.2-6 8.2-5.3 8.1-5 8.2-4.6 16.3-9 57.2-30.6 65.3-34.8M604.1 742l89.8-48 8.2-4.4 8.2-4.6 8.1-5.6 8.2-7.6 8.2-11.2 8.1-16.3 8.2-21.6 8.1-26.1 16.4-56.6 8.1-26 8.2-22.6 8.2-18.5 8.1-14.9 8.2-11.7 8.2-9.2 8.1-7.5 8.2-6.2 8.2-5.5 8.1-5 8.2-4.8 8.2-4.5 24.5-13.3 106.1-56.6M608.9 743.8l98-52.3 8.2-4.6 8.1-5.3 8.2-7.1 8.2-10.4 8.1-15.2 8.2-20.5 8.1-25.2 8.2-27.9 8.2-28.3 8.1-26.6 8.2-23.3 8.2-19.4 8.1-15.7 8.2-12.3 8.2-9.8 8.1-7.8 8.2-6.5 8.2-5.7 8.1-5.1 8.2-4.8 8.2-4.6 16.3-8.9 106.1-56.6 8.2-4.4M613.7 745.6l98-52.3 8.2-4.6 8.1-5.1 8.2-6.6 8.1-9.7 8.2-14.1 8.2-19.3 8.1-24.3 8.2-27.4 8.2-28.3 8.1-27 8.2-24 8.2-20.3 8.1-16.4 8.2-13 8.2-10.3 8.1-8.3 8.2-6.7 8.2-5.9 8.1-5.2 8.2-4.9 8.2-4.6 16.3-8.9 65.3-35 49-26.1M618.5 747.4l98-52.3 8.2-4.5 8.1-5 8.2-6.2 8.1-9 8.2-13.1 8.2-18.2 8.1-23.2 8.2-26.8 8.2-28.2 8.1-27.3 8.2-24.7 8.2-21.1 8.1-17.3 8.2-13.7 8.2-10.9 8.1-8.6 8.2-7.1 8.2-6.1 8.1-5.3 8.2-4.9 8.2-4.7 16.3-9 49-26.2 65.3-34.9M623.3 749.2l98-52.3 8.1-4.4 8.2-4.9 8.2-5.9 8.1-8.3 8.2-12.2 8.2-17.1 8.1-22.2 8.2-26.1 8.2-27.9 8.1-27.6 8.2-25.3 8.2-21.9 8.1-18 8.2-14.5 8.2-11.5 8.1-9.1 8.2-7.4 8.2-6.3 8.1-5.5 8.2-5 8.2-4.7 8.1-4.6 24.5-13.3 98-52.3M153.1 571.6l470.2 177.6M161.3 379l4.8 13.3 4.8 18.9 4.8 24 4.8 27.3 4.8 28 4.8 26.3 4.7 22.3 4.8 17.4 4.8 12.6 4.8 8.7 4.8 5.7 4.8 3.9 4.8 2.7 4.8 2.3 4.8 2 19.2 7.3 379.1 143.1M169.4 369.2l4.8 4 4.8 5.5 4.8 7.4 4.8 9.7 4.8 12.2 4.8 14.7 4.8 16.9 4.8 18.5 9.6 39 4.8 18.7 4.8 17.2 4.8 15 4.8 12.7 4.8 10.4 4.8 8.2 4.8 6.4 4.8 4.9 4.8 3.9 4.8 3 4.8 2.6 4.8 2.2 4.8 2.1 9.6 3.8 215.9 81.6 134.3 50.7M177.6 364l4.8 2.3 4.8 2.7 4.8 3.4 4.8 4 4.8 5.1 4.8 6.2 4.8 7.7 4.8 9.2 4.8 10.9 4.8 12.4 4.8 13.8 4.8 15 4.8 15.7 9.6 32 4.8 15.3 4.8 14.4 4.8 13.1 4.8 11.6 4.8 10.1 4.8 8.6 4.7 7.2 4.8 5.9 4.8 4.9 4.8 4 4.8 3.4 4.8 2.8 4.8 2.5 4.8 2.3 4.8 2 9.6 3.9 24 9.2 292.7 110.5M185.8 359.4l4.8 2 4.8 2 4.8 2.3 4.8 2.4 4.7 2.9 4.8 3.2 4.8 3.9 4.8 4.5 4.8 5.4 4.8 6.4 4.8 7.5 4.8 8.6 4.8 9.8 4.8 11 4.8 12 4.8 12.9 4.8 13.5 14.4 41.8 4.8 13.3 4.8 12.7 4.8 11.7 4.8 10.7 4.8 9.5 4.8 8.5 4.8 7.3 4.8 6.3 4.8 5.3 4.8 4.6 4.8 3.9 4.8 3.4 4.8 2.9 4.8 2.6 4.8 2.4 4.8 2.2 4.8 2 9.6 3.9 24 9.2 259.1 97.9M193.9 355l9.6 3.7 9.6 4 4.8 2.1 4.8 2.3 4.8 2.5 4.8 2.8 4.8 3.1 4.8 3.6 4.8 4.1 4.8 4.8 4.8 5.4 4.8 6.3 4.8 7.2 4.8 8.1 4.8 9 4.8 10 4.8 10.7 4.8 11.5 4.8 12 9.6 25.1 9.6 25 4.8 12 4.8 11.5 4.8 10.7 4.8 9.9 4.8 9 4.8 8.2 4.8 7.2 4.8 6.4 4.8 5.6 4.8 4.8 4.8 4.3 4.7 3.7 4.8 3.3 4.8 2.9 4.8 2.6 4.8 2.4 4.8 2.3 4.8 2.1 9.6 3.9 14.4 5.7 115.2 43.5 124.7 47.1M202.1 350.6l19.2 7.4 9.6 3.9 4.8 2 4.8 2.2 4.8 2.3 4.8 2.4 4.8 2.7 4.8 3 4.8 3.3 4.8 3.8 4.8 4.2 4.8 4.8 4.8 5.5 4.8 6.1 4.8 6.9 4.7 7.6 4.8 8.4 4.8 9.1 4.8 9.9 4.8 10.4 4.8 11 4.8 11.3 14.4 34.8 4.8 11.4 4.8 11 4.8 10.6 4.8 9.9 4.8 9.3 4.8 8.5 4.8 7.8 4.8 7.1 4.8 6.3 4.8 5.7 4.8 5 4.8 4.5 4.8 3.9 4.8 3.6 4.8 3.1 4.8 2.9 4.8 2.6 4.8 2.4 4.8 2.2 4.8 2.2 9.6 4 14.4 5.6 48 18.3 163.1 61.6M210.3 346.3l28.7 11 9.6 3.8 9.6 4 4.8 2.1 4.8 2.3 4.8 2.4 4.8 2.6 4.8 2.8 4.8 3.2 4.8 3.4 4.8 3.9 4.8 4.2 4.8 4.9 4.8 5.3 4.8 6 4.8 6.5 4.8 7.3 4.8 7.8 4.8 8.5 4.8 9.1 4.8 9.7 4.8 10.1 4.8 10.5 9.6 21.6 9.6 21.6 4.8 10.6 4.8 10.3 4.8 9.8 4.8 9.3 4.8 8.8 4.8 8.1 4.8 7.5 4.8 6.9 4.8 6.2 4.8 5.7 4.8 5.1 4.8 4.5 4.8 4.1 4.8 3.7 4.8 3.4 4.8 3 4.8 2.8 4.8 2.5 4.7 2.4 4.8 2.2 9.6 4.2 9.6 4 19.2 7.4 163.2 61.7 9.6 3.6M218.4 341.9l38.4 14.6 14.4 5.7 9.6 4 4.8 2.1 4.8 2.3 4.8 2.3 4.8 2.5 4.8 2.7 4.8 3 4.8 3.2 4.8 3.5 4.8 3.9 4.8 4.3 4.8 4.7 4.8 5.3 4.8 5.7 4.8 6.3 4.8 6.9 4.8 7.5 4.8 8 4.8 8.5 4.8 9 4.8 9.4 4.8 9.7 9.5 20.3 14.4 30.7 4.8 9.9 4.8 9.6 4.8 9.3 4.8 8.8 4.8 8.3 4.8 7.8 4.8 7.2 4.8 6.7 4.8 6.1 4.8 5.6 4.8 5.1 4.8 4.6 4.8 4.2 4.8 3.8 4.8 3.5 4.8 3.2 4.8 2.9 4.8 2.6 4.8 2.5 4.8 2.4 4.8 2.2 9.6 4.2 14.4 5.8 24 9.3 134.3 50.8M226.6 337.6l48 18.2 14.4 5.6 9.6 3.9 9.6 4.1 4.7 2.2 4.8 2.3 4.8 2.4 4.8 2.6 4.8 2.8 4.8 3 4.8 3.2 4.8 3.6 4.8 3.9 4.8 4.2 4.8 4.7 4.8 5.1 4.8 5.6 4.8 6.1 4.8 6.6 4.8 7.1 4.8 7.5 4.8 8 4.8 8.5 4.8 8.8 4.8 9.2 4.8 9.5 19.2 38.9 4.8 9.6 4.8 9.4 4.8 9.1 4.8 8.8 4.8 8.3 4.8 8 4.8 7.4 4.8 7 4.8 6.5 4.8 6 4.8 5.5 4.8 5.1 4.8 4.6 4.8 4.3 4.8 3.9 4.8 3.5 4.8 3.3 4.8 3 4.8 2.8 4.8 2.6 4.8 2.4 4.8 2.3 9.6 4.3 9.5 4.1 14.4 5.7 28.8 11 96 36.3M234.8 333.2l57.5 21.8 19.2 7.5 9.6 3.9 9.6 4 4.8 2.2 4.8 2.2 4.8 2.4 4.8 2.4 4.8 2.7 4.8 2.8 4.8 3.1 4.8 3.3 4.8 3.5 4.8 3.9 4.8 4.2 4.8 4.6 4.8 5 4.8 5.5 4.8 5.8 4.8 6.3 4.8 6.8 4.8 7.1 4.8 7.7 4.8 8 4.8 8.3 4.8 8.7 4.8 8.9 9.6 18.5 14.4 28 4.8 9.1 4.8 9 4.7 8.6 4.8 8.4 4.8 8 4.8 7.6 4.8 7.2 4.8 6.7 4.8 6.4 4.8 5.8 4.8 5.5 4.8 5 4.8 4.6 4.8 4.3 4.8 3.9 4.8 3.6 4.8 3.4 4.8 3 4.8 2.9 4.8 2.7 4.8 2.5 4.8 2.4 4.8 2.3 9.6 4.3 9.6 4 14.4 5.7 28.8 11.1 67.2 25.3M242.9 328.8l72 27.3 19.2 7.5 14.4 5.8 9.6 4.2 4.8 2.2 4.8 2.2 4.8 2.4 4.8 2.6 4.8 2.6 4.8 2.9 4.8 3.1 4.8 3.3 4.7 3.5 4.8 3.9 4.8 4.2 4.8 4.5 4.8 4.9 4.8 5.2 4.8 5.7 4.8 6 4.8 6.5 4.8 6.9 4.8 7.2 4.8 7.6 4.8 8 4.8 8.2 4.8 8.5 9.6 17.6 19.2 35.9 4.8 8.7 4.8 8.6 4.8 8.3 4.8 8 4.8 7.6 4.8 7.4 4.8 6.9 4.8 6.5 4.8 6.2 4.8 5.7 4.8 5.4 4.8 5 4.8 4.6 4.8 4.2 4.8 4 4.8 3.6 4.8 3.4 4.8 3.2 4.8 2.9 4.8 2.8 4.8 2.5 4.8 2.5 4.8 2.3 9.6 4.4 9.6 4.1 14.3 5.8 24 9.3 48 18.2M251.1 324.5l81.5 30.8 24 9.3 14.4 5.9 9.6 4 9.6 4.4 4.8 2.3 4.8 2.5 4.8 2.5 4.8 2.7 4.8 2.9 4.8 3.1 4.8 3.3 4.8 3.6 4.8 3.8 4.8 4.1 4.8 4.4 4.8 4.8 4.8 5.1 4.8 5.5 4.8 5.8 4.8 6.2 4.8 6.6 4.8 6.9 4.8 7.3 4.8 7.6 4.8 7.9 4.8 8.1 4.8 8.3 9.6 17.1 14.4 26 9.6 17 4.8 8.2 4.8 8 4.8 7.7 4.8 7.3 4.8 7.1 4.8 6.7 4.7 6.4 4.8 6 4.8 5.6 4.8 5.2 4.8 5 4.8 4.5 4.8 4.3 4.8 3.9 4.8 3.7 4.8 3.4 4.8 3.2 4.8 3 4.8 2.8 4.8 2.7 4.8 2.5 4.8 2.4 9.6 4.5 9.6 4.1 14.4 5.9 19.2 7.5 28.8 11M259.2 320.1l96 36.3 24 9.3 14.4 5.8 9.6 4 9.6 4.3 4.8 2.3 4.8 2.3 4.8 2.5 4.8 2.5 4.8 2.8 4.8 2.9 4.8 3.1 4.8 3.3 4.8 3.5 4.8 3.8 4.8 4 4.8 4.4 4.8 4.6 4.8 5 4.8 5.3 4.7 5.6 4.8 6 4.8 6.4 4.8 6.6 4.8 7 4.8 7.2 4.8 7.6 4.8 7.8 4.8 8 9.6 16.4 19.2 33.5 9.6 16.4 4.8 7.9 4.8 7.6 4.8 7.5 4.8 7.1 4.8 6.8 4.8 6.5 4.8 6.2 4.8 5.9 4.8 5.5 4.8 5.1 4.8 4.9 4.8 4.5 4.8 4.2 4.8 4 4.8 3.7 4.8 3.4 4.8 3.3 4.8 3 4.8 2.9 4.8 2.6 4.8 2.6 4.8 2.4 4.8 2.4 9.6 4.4 9.6 4.1 14.4 5.9 19.1 7.5M267.4 315.8l110.4 41.7 24 9.3 14.3 5.7 9.6 4 9.6 4.2 9.6 4.5 4.8 2.3 4.8 2.5 4.8 2.6 4.8 2.8 4.8 2.9 4.8 3.1 4.8 3.3 4.8 3.5 4.8 3.7 4.8 4 4.8 4.2 4.8 4.6 4.8 4.8 4.8 5.2 4.8 5.4 4.8 5.8 4.8 6.1 4.8 6.4 4.8 6.7 4.8 7 4.8 7.2 4.8 7.5 4.8 7.7 9.6 15.8 24 40.7 9.6 15.7 4.8 7.7 4.8 7.4 4.8 7.2 4.8 6.9 4.8 6.6 4.8 6.3 4.8 6 4.8 5.7 4.8 5.4 4.8 5.1 4.8 4.8 4.7 4.5 4.8 4.2 4.8 3.9 4.8 3.7 4.8 3.5 4.8 3.2 4.8 3.1 4.8 2.9 4.8 2.7 4.8 2.6 4.8 2.5 4.8 2.4 9.6 4.4 9.6 4.2 9.6 4M275.6 311.4l124.7 47.2 24 9.2 14.4 5.8 14.4 5.9 9.6 4.3 9.6 4.5 4.8 2.4 4.8 2.5 4.8 2.6 4.8 2.7 4.8 2.9 4.8 3.1 4.8 3.3 4.8 3.5 4.8 3.6 4.8 4 4.8 4.2 4.8 4.4 4.8 4.7 4.8 5 4.8 5.3 4.8 5.6 4.8 5.9 4.8 6.2 4.8 6.4 4.8 6.8 4.8 6.9 4.8 7.2 4.7 7.4 9.6 15.3 28.8 47.4 9.6 15.2 4.8 7.4 4.8 7.2 4.8 7 4.8 6.7 4.8 6.4 4.8 6.1 4.8 5.9 4.8 5.6 4.8 5.3 4.8 5 4.8 4.7 4.8 4.4 4.8 4.2 4.8 3.9 4.8 3.7 4.8 3.5 4.8 3.3 4.8 3.1 4.8 2.9 4.8 2.7 4.8 2.7 4.8 2.5 4.8 2.4 4.8 2.3M283.7 307.1l139.2 52.6 28.8 11.1 14.4 5.7 14.4 6.1 9.6 4.2 9.6 4.6 4.7 2.4 4.8 2.5 4.8 2.6 4.8 2.8 4.8 2.9 4.8 3 4.8 3.3 4.8 3.4 4.8 3.6 4.8 3.9 4.8 4.1 4.8 4.4 4.8 4.6 4.8 4.8 4.8 5.2 4.8 5.4 4.8 5.7 4.8 6 4.8 6.2 4.8 6.5 4.8 6.7 4.8 7 4.8 7.1 4.8 7.3 9.6 15.1 24 38.6 9.6 15 4.8 7.4 4.8 7.1 4.8 7 4.8 6.7 4.8 6.6 4.8 6.2 4.8 6 4.8 5.8 4.8 5.4 4.8 5.2 4.8 4.9 4.8 4.7 4.8 4.4 4.8 4.1 4.8 3.9 4.8 3.7 4.8 3.5 4.7 3.2 4.8 3.1 4.8 3M291.9 302.7l153.5 58.1 28.8 11 14.4 5.8 14.4 5.9 9.6 4.2 9.6 4.4 4.8 2.3 4.8 2.4 4.8 2.6 4.8 2.6 4.8 2.7 4.8 2.9 4.8 3.1 4.8 3.2 4.8 3.4 4.8 3.6 4.8 3.8 4.8 4 4.8 4.3 4.8 4.5 4.8 4.7 4.8 5.1 4.8 5.2 4.8 5.5 4.8 5.8 4.8 6.1 4.8 6.2 4.8 6.5 4.8 6.7 4.8 6.9 4.8 7.1 9.6 14.6 19.1 30.1 9.6 15 9.6 14.7 4.8 7.1 4.8 7 4.8 6.8 4.8 6.5 4.8 6.4 4.8 6.1 4.8 5.8 4.8 5.6 4.8 5.4 4.8 5.1 4.8 4.8 4.8 4.6 4.8 4.3 4.8 4.1 4.8 3.9M300.1 298.4l167.9 63.4 28.8 11.1 19.2 7.6 14.4 6 9.6 4.2 9.6 4.5 9.6 4.7 4.8 2.5 4.8 2.6 4.8 2.8 4.8 2.9 4.8 3 4.8 3.2 4.8 3.4 4.7 3.5 4.8 3.8 4.8 3.9 4.8 4.2 4.8 4.4 4.8 4.6 4.8 4.9 4.8 5.1 4.8 5.4 4.8 5.6 4.8 5.8 4.8 6.1 4.8 6.3 4.8 6.5 4.8 6.7 4.8 6.9 9.6 14.1 14.4 22 19.2 29.4 9.6 14.3 4.8 7 4.8 6.7 4.8 6.6 4.8 6.4 4.8 6.2 4.8 6 4.8 5.7 4.8 5.5 4.8 5.2 4.8 5M308.2 294l182.4 68.9 28.7 11.1 19.2 7.5 14.4 6 9.6 4.1 9.6 4.3 9.6 4.6 4.8 2.4 4.8 2.6 4.8 2.6 4.8 2.7 4.8 2.9 4.8 3 4.8 3.2 4.8 3.3 4.8 3.5 4.8 3.7 4.8 3.9 4.8 4.1 4.8 4.3 4.8 4.5 4.8 4.8 4.8 4.9 4.8 5.3 4.8 5.4 4.8 5.7 4.8 5.9 4.8 6.1 4.8 6.3 4.8 6.5 4.8 6.6 9.6 13.8 9.6 14.2 24 36.1 9.6 14.1 9.5 13.7 4.8 6.6 4.8 6.4 4.8 6.3 4.8 6M316.4 289.6l201.5 76.2 28.8 11.1 19.2 7.6 14.4 5.9 9.6 4.2 9.6 4.3 9.6 4.6 4.8 2.5 4.8 2.5 4.8 2.6 4.8 2.7 4.8 2.9 4.8 3 4.8 3.1 4.8 3.3 4.8 3.5 4.8 3.6 4.8 3.8 4.8 4 4.8 4.2 4.8 4.5 4.8 4.6 4.7 4.9 4.8 5.1 4.8 5.3 4.8 5.5 4.8 5.7 4.8 5.9 4.8 6.2 4.8 6.3 4.8 6.4 9.6 13.4 9.6 13.9 28.8 42.4 9.6 13.8 4.8 6.7M324.6 285.3l215.9 81.6 33.6 12.9 19.2 7.6 14.4 6 9.5 4.2 9.6 4.3 9.6 4.6 9.6 5 4.8 2.6 4.8 2.7 4.8 2.9 4.8 2.9 4.8 3.1 4.8 3.3 4.8 3.4 4.8 3.6 4.8 3.7 4.8 4 4.8 4.1 4.8 4.3 4.8 4.6 4.8 4.7 4.8 5 4.8 5.1 4.8 5.4 4.8 5.6 4.8 5.7 4.8 6 4.8 6.1 4.8 6.3 4.8 6.5 9.6 13.3 9.6 13.6 19.2 27.9M332.7 280.9l230.3 87.1 33.6 12.9 19.2 7.5 14.4 5.9 14.4 6.2 9.6 4.4 9.6 4.6 9.6 5 4.8 2.6 4.8 2.7 4.8 2.8 4.8 2.9 4.8 3.1 4.8 3.2 4.8 3.4 4.8 3.5 4.8 3.7 4.8 3.9 4.8 4.1 4.8 4.2 4.8 4.4 4.8 4.7 4.8 4.8 4.8 5 4.8 5.3 4.8 5.4 4.8 5.6 4.8 5.8 4.7 6 4.8 6.1 4.8 6.3 9.6 12.9 9.6 13.4M340.9 276.6l244.7 92.4 33.6 12.9 19.2 7.6 14.4 5.8 14.4 6.1 9.6 4.3 9.6 4.5 9.6 4.7 4.7 2.5 4.8 2.6 4.8 2.7 4.8 2.8 4.8 3 4.8 3 4.8 3.2 4.8 3.3 4.8 3.5 4.8 3.6 4.8 3.8 4.8 4 4.8 4.2 4.8 4.3 4.8 4.6 4.8 4.7 4.8 4.9 4.8 5.1 4.8 5.3 4.8 5.4 4.8 5.7 4.8 5.8 4.8 6 4.8 6.1M349.1 272.2l263.9 99.7 33.5 12.9 19.2 7.6 14.4 5.8 14.4 6.2 9.6 4.2 9.6 4.5 9.6 4.8 9.6 5.1 4.8 2.7 4.8 2.7 4.8 2.9 4.8 3.1 4.8 3.1 4.8 3.3 4.8 3.4 4.8 3.6 4.8 3.8 4.8 3.9 4.8 4 4.8 4.3 4.8 4.4 4.8 4.7 4.8 4.8 4.8 4.9 4.8 5.2 4.8 5.3M357.2 267.9l278.3 105.1 38.4 14.7 19.2 7.6 14.4 5.9 14.4 6.1 9.6 4.3 9.6 4.5 9.6 4.7 9.6 5.1 4.8 2.7 4.8 2.7 4.8 2.9 4.8 3 4.8 3.1 4.7 3.3 4.8 3.4 4.8 3.5 4.8 3.7 4.8 3.8 4.8 4 4.8 4.2 4.8 4.3 4.8 4.6M365.4 263.5l297.5 112.4 33.6 12.9 23.9 9.4 14.4 5.9 14.4 6.2 9.6 4.3 9.6 4.4 9.6 4.8 9.6 5 4.8 2.7 4.8 2.7 4.8 2.9 4.8 2.9 4.8 3.1 4.8 3.2 4.8 3.4 4.8 3.5 4.8 3.6 4.8 3.8M373.6 259.2l311.8 117.8 38.4 14.7 24 9.5 14.4 5.9 14.4 6.1 9.6 4.3 9.6 4.5 9.6 4.7 9.6 5 4.8 2.7 4.8 2.7 4.8 2.8 4.8 3 4.8 3 4.8 3.2M381.7 254.8l326.3 123.3 38.4 14.7 24 9.4 14.4 5.8 14.4 6.1 14.3 6.3 9.6 4.5 9.6 4.7 9.6 5 9.6 5.4M389.9 250.4l345.4 130.6 38.4 14.7 24 9.4 19.2 7.8 14.4 6.2 9.6 4.3 9.6 4.5 9.6 4.7M398.1 246.1l359.8 135.9 38.4 14.7 24 9.4 19.2 7.8 14.4 6 14.4 6.4M406.2 241.7l379.1 143.2 38.3 14.7 24 9.4 19.2 7.8 9.6 4M414.4 237.4l393.4 148.6 43.2 16.5 24 9.4 9.6 3.9M422.6 233l412.6 155.9 43.2 16.5 14.4 5.7M430.7 228.7l431.8 163.1 38.4 14.7M438.9 224.3l446.2 168.6 24 9.1M447 220l465.5 175.8 4.8 1.8M455.2 215.6l470.2 177.6M463.4 211.3l470.2 177.6M471.5 206.9l470.2 177.6M479.7 202.5l470.2 177.6M487.9 198.2l470.2 177.6M496 193.8l470.2 177.6M504.2 189.5l470.2 177.6M512.4 185.1l470.2 177.6M520.5 180.8l470.2 177.6M528.7 176.4l470.2 177.6M536.9 172.1l470.2 177.5M545 167.7l470.2 177.6M553.2 163.3l470.2 177.6"/></g>
<line x1="148.3" y1="605.2" x2="623.3" y2="784.6" stroke="#262626" stroke-width="1.25"/>
<line x1="623.3" y1="784.6" x2="1023.4" y2="571.2" stroke="#262626" stroke-width="1.25"/>
<line x1="148.3" y1="605.2" x2="148.3" y2="357.2" stroke="#262626" stroke-width="1.25"/>
<line x1="148.3" y1="605.2" x2="136.7" y2="611.4" stroke="#262626" stroke-width="1.25"/>
<line x1="195.8" y1="623.2" x2="184.2" y2="629.4" stroke="#262626" stroke-width="1.25"/>
<line x1="243.3" y1="641.1" x2="231.7" y2="647.3" stroke="#262626" stroke-width="1.25"/>
<line x1="290.8" y1="659.0" x2="279.2" y2="665.3" stroke="#262626" stroke-width="1.25"/>
<line x1="338.3" y1="677.0" x2="326.7" y2="683.2" stroke="#262626" stroke-width="1.25"/>
<line x1="385.8" y1="694.9" x2="374.2" y2="701.1" stroke="#262626" stroke-width="1.25"/>
<line x1="433.3" y1="712.9" x2="421.7" y2="719.1" stroke="#262626" stroke-width="1.25"/>
<line x1="480.8" y1="730.8" x2="469.2" y2="737.0" stroke="#262626" stroke-width="1.25"/>
<line x1="528.3" y1="748.7" x2="516.7" y2="755.0" stroke="#262626" stroke-width="1.25"/>
<line x1="575.8" y1="766.7" x2="564.2" y2="772.9" stroke="#262626" stroke-width="1.25"/>
<line x1="623.3" y1="784.6" x2="611.7" y2="790.8" stroke="#262626" stroke-width="1.25"/>
<line x1="623.3" y1="784.6" x2="635.6" y2="789.3" stroke="#262626" stroke-width="1.25"/>
<line x1="663.3" y1="763.3" x2="675.7" y2="768.0" stroke="#262626" stroke-width="1.25"/>
<line x1="703.3" y1="741.9" x2="715.7" y2="746.6" stroke="#262626" stroke-width="1.25"/>
<line x1="743.3" y1="720.6" x2="755.7" y2="725.3" stroke="#262626" stroke-width="1.25"/>
<line x1="783.3" y1="699.3" x2="795.7" y2="703.9" stroke="#262626" stroke-width="1.25"/>
<line x1="823.3" y1="677.9" x2="835.7" y2="682.6" stroke="#262626" stroke-width="1.25"/>
<line x1="863.4" y1="656.6" x2="875.7" y2="661.3" stroke="#262626" stroke-width="1.25"/>
<line x1="903.4" y1="635.2" x2="915.7" y2="639.9" stroke="#262626" stroke-width="1.25"/>
<line x1="943.4" y1="613.9" x2="955.7" y2="618.6" stroke="#262626" stroke-width="1.25"/>
<line x1="983.4" y1="592.6" x2="995.7" y2="597.2" stroke="#262626" stroke-width="1.25"/>
<line x1="1023.4" y1="571.2" x2="1035.7" y2="575.9" stroke="#262626" stroke-width="1.25"/>
<line x1="148.3" y1="605.2" x2="136.0" y2="600.6" stroke="#262626" stroke-width="1.25"/>
<line x1="148.3" y1="569.8" x2="136.0" y2="565.1" stroke="#262626" stroke-width="1.25"/>
<line x1="148.3" y1="534.4" x2="136.0" y2="529.7" stroke="#262626" stroke-width="1.25"/>
<line x1="148.3" y1="498.9" x2="136.0" y2="494.3" stroke="#262626" stroke-width="1.25"/>
<line x1="148.3" y1="463.5" x2="136.0" y2="458.8" stroke="#262626" stroke-width="1.25"/>
<line x1="148.3" y1="428.1" x2="136.0" y2="423.4" stroke="#262626" stroke-width="1.25"/>
<line x1="148.3" y1="392.6" x2="136.0" y2="388.0" stroke="#262626" stroke-width="1.25"/>
<line x1="148.3" y1="357.2" x2="136.0" y2="352.6" stroke="#262626" stroke-width="1.25"/>
<g font-family="Liberation Sans, sans-serif" font-size="13.33" fill="#262626"><text x="132.1" y="628.3" text-anchor="end">0</text><text x="179.6" y="646.3" text-anchor="end">0.01</text><text x="227.1" y="664.2" text-anchor="end">0.02</text><text x="274.6" y="682.2" text-anchor="end">0.03</text><text x="322.1" y="700.1" text-anchor="end">0.04</text><text x="369.6" y="718.0" text-anchor="end">0.05</text><text x="417.1" y="736.0" text-anchor="end">0.06</text><text x="464.6" y="753.9" text-anchor="end">0.07</text><text x="512.1" y="771.9" text-anchor="end">0.08</text><text x="559.6" y="789.8" text-anchor="end">0.09</text><text x="607.1" y="807.7" text-anchor="end">0.1</text><text x="641.2" y="805.0" text-anchor="start">0</text><text x="681.3" y="783.7" text-anchor="start">20</text><text x="721.3" y="762.3" text-anchor="start">40</text><text x="761.3" y="741.0" text-anchor="start">60</text><text x="801.3" y="719.6" text-anchor="start">80</text><text x="841.3" y="698.3" text-anchor="start">100</text><text x="881.3" y="677.0" text-anchor="start">120</text><text x="921.3" y="655.6" text-anchor="start">140</text><text x="961.3" y="634.3" text-anchor="start">160</text><text x="1001.3" y="612.9" text-anchor="start">180</text><text x="1041.3" y="591.6" text-anchor="start">200</text><text x="129.8" y="604.9" text-anchor="end">-1</text><text x="129.8" y="569.4" text-anchor="end">0</text><text x="129.8" y="534.0" text-anchor="end">1</text><text x="129.8" y="498.6" text-anchor="end">2</text><text x="129.8" y="463.1" text-anchor="end">3</text><text x="129.8" y="427.7" text-anchor="end">4</text><text x="129.8" y="392.3" text-anchor="end">5</text><text x="129.8" y="356.9" text-anchor="end">6</text><text x="445.7" y="784.8" text-anchor="middle" style="font-size:14.67px">x</text><text x="777.0" y="775.7" text-anchor="middle" style="font-size:14.67px">t</text><text transform="translate(110.1,481) rotate(-90)" text-anchor="middle" style="font-size:14.67px">c</text><text x="108.6" y="334.2" style="font-size:14.5px">×</text><text x="119.0" y="332.0" text-anchor="start">10</text><text x="133.6" y="326.2" style="font-size:10.7px">-4</text></g>
<text x="585.6" y="136.9" text-anchor="middle" font-family="Liberation Sans, sans-serif" font-weight="bold" font-size="14.67" fill="#000">c(x, t)</text>
<g fill="none" stroke="#707070" stroke-width="1.200" stroke-linecap="round" stroke-linejoin="round"><g transform="translate(865,124)"><path d="M1.500 9.500v5h12M3.500 11c1-4 3.500-6 6.500-6v-3l4.500 4.500-4.500 4.500v-3c-2.500 0-4.500 1-6.500 3z"/><path d="M14 15.500h2.500v-2.500z" fill="#707070" stroke="none"/></g><g transform="translate(886,124)"><path d="M7.500 1h3.500v5.500l2.500 4h-9l2.500-4z"/><path d="M4.500 10.500l-3.500 6h11.500l1-6" fill="#707070" fill-opacity=".45"/></g><g transform="translate(906,124)"><path d="M3.500 1.500h11v14h-11v-5.500l-2-1.500 2-1.500z"/><path d="M6 6.500h6M6 10h6"/></g><g transform="translate(925,124)"><path d="M14 4.500a7 7 0 1 0 2.200 5"/><path d="M11.500 4.800l3 .2-.2-3.200"/><path d="M9 5.500l3.200 1.800v3.600l-3.200 1.800-3.200-1.800v-3.600zM5.800 7.300l3.200 1.800 3.200-1.800M9 9.100v3.600" stroke-width="1"/></g><g transform="translate(946,124)"><path d="M4.500 9v-5a1.100 1.100 0 0 1 2.200 0v-1.500a1.100 1.100 0 0 1 2.200 0v1a1.100 1.100 0 0 1 2.200 0v1.500a1.100 1.100 0 0 1 2.200 0v6.500c0 3-1.500 5-3 5h-3.500c-1.500 0-2.500-1-3.500-2.500l-2.300-3.800c-.6-1.200 1-2 1.800-1z"/><path d="M6.700 4v4M8.900 3.500v4.500M11.100 5v3.500" stroke-width="1"/></g><g transform="translate(965,124)"><circle cx="7" cy="7.500" r="5.800"/><path d="M11.200 11.800l5 5M4 7.500h6M7 4.500v6"/></g><g transform="translate(985,124)"><circle cx="7" cy="7.500" r="5.800"/><path d="M11.200 11.800l5 5M4 7.500h6"/></g><g transform="translate(1005,124)"><path d="M1 9l8-7.500 8 7.500M3.500 8v8.500h4v-5h3.500v5h4v-8.500M12.500 2h2.200v3"/></g></g>
<g fill="none"><path d="M141.0 468.5h15M148.5 461.0v15" stroke="#000" stroke-width="3"/><path d="M142.0 468.5h13M148.5 462.0v13" stroke="#fff" stroke-width="1"/></g>
</svg>
<div class="a" style="left:0;top:0;width:1132px;height:1px;background:#707070"></div>
<div class="a" style="left:0;top:0;width:1px;height:873px;background:#9a9a9a"></div>
<div class="a" style="left:1131px;top:0;width:1px;height:873px;background:#9a9a9a"></div>
<div class="a" style="left:0;top:872px;width:1132px;height:1px;background:#9a9a9a"></div>
</body></html>
